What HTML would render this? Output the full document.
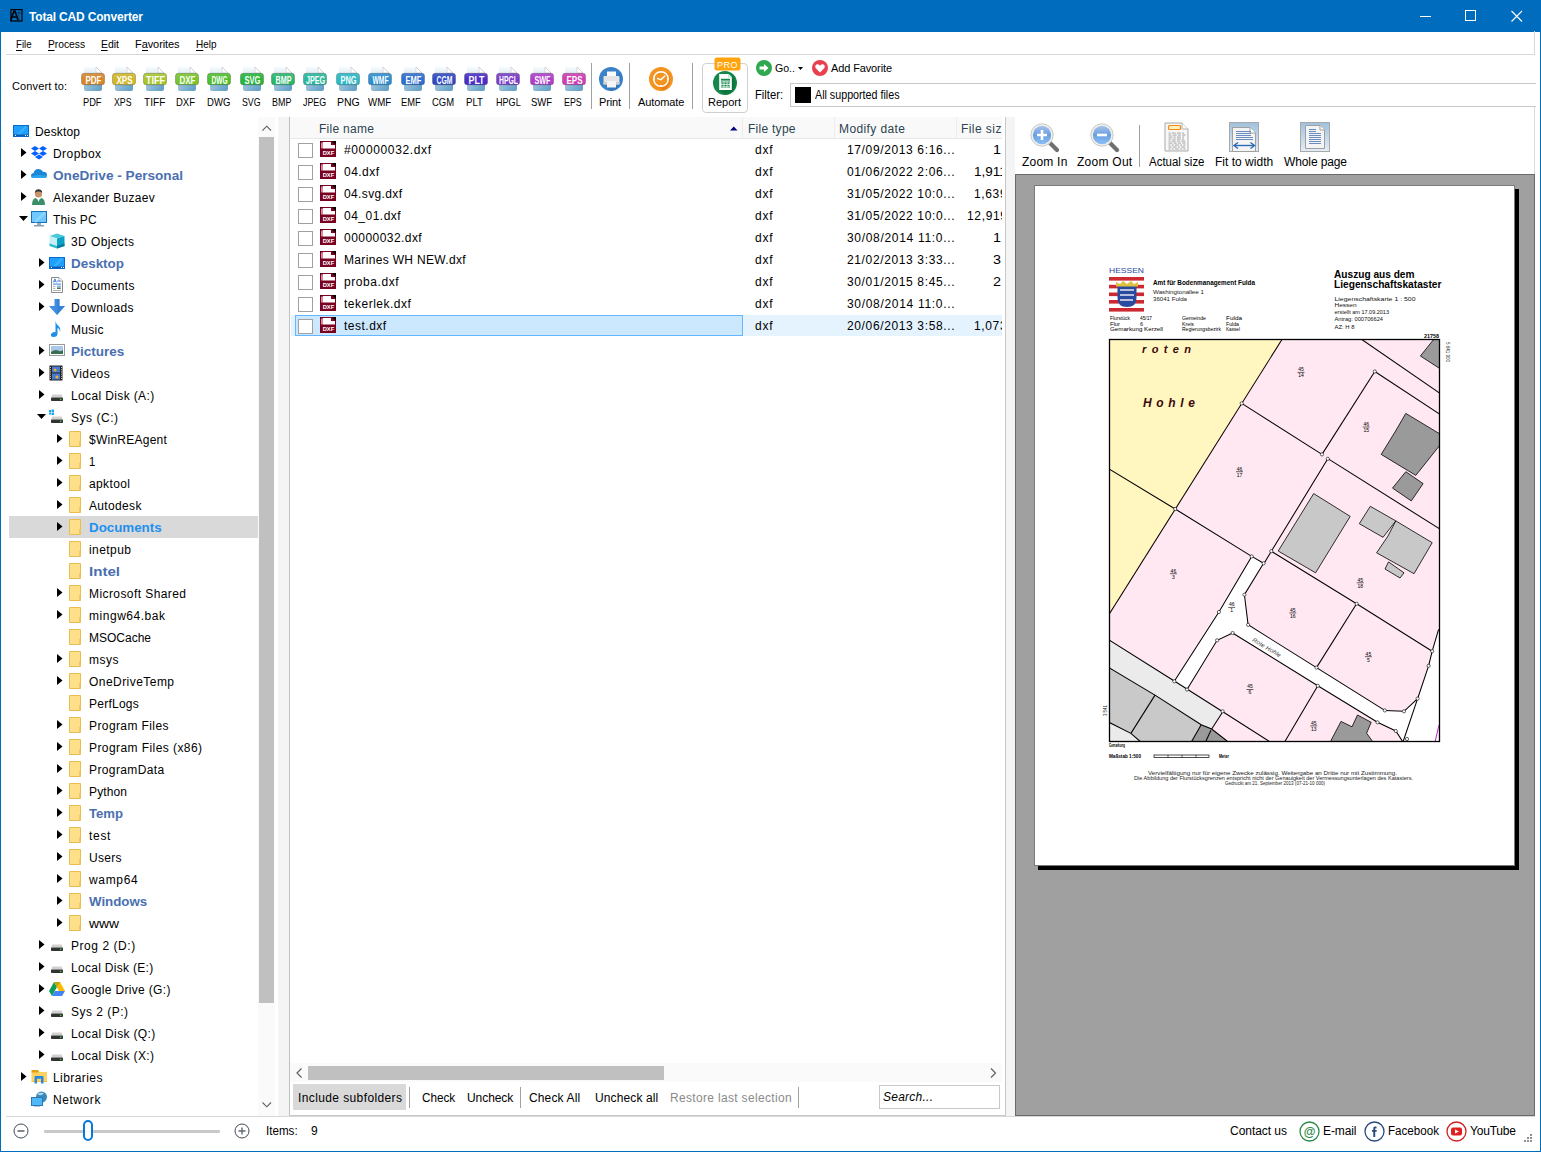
<!DOCTYPE html>
<html><head><meta charset="utf-8"><style>
html,body{margin:0;padding:0;}
body{width:1541px;height:1152px;position:relative;overflow:hidden;background:#fff;font-family:"Liberation Sans", sans-serif;font-size:12px;color:#000;}
div,svg{box-sizing:border-box;}
u{text-decoration:none;border-bottom:1px solid currentColor;}
</style></head><body>
<div style="position:absolute;left:0px;top:0px;width:1541px;height:32px;background:#006cbe;"></div><div style="position:absolute;left:0px;top:0px;width:1px;height:1152px;background:#006cbe;"></div><div style="position:absolute;left:1540px;top:0px;width:1px;height:1152px;background:#006cbe;"></div><div style="position:absolute;left:0px;top:1151px;width:1541px;height:1px;background:#006cbe;"></div><svg style="position:absolute;left:10px;top:9px;" width="13" height="13" viewBox="0 0 13 13"><rect x="1" y="0.5" width="11" height="11.5" fill="none" stroke="#000" stroke-width="1.2"/><path d="M0.5 12 L4 2 L5 2 L8 11 M2 8 H7" stroke="#000" stroke-width="1.6" fill="none"/><path d="M9 1 V12 M4 4 H12" stroke="#000" stroke-width="0.6" fill="none" opacity="0.6"/></svg><div style="position:absolute;top:11px;font-size:12px;line-height:12px;color:#fff;white-space:nowrap;font-weight:bold;letter-spacing:-0.173px;left:29px;">Total CAD Converter</div><svg style="position:absolute;left:1419px;top:10px;" width="14" height="12" viewBox="0 0 14 12"><path d="M1 6.5 H12" stroke="#fff" stroke-width="1"/></svg><svg style="position:absolute;left:1464px;top:10px;" width="14" height="12" viewBox="0 0 14 12"><rect x="1.5" y="0.5" width="10" height="10" fill="none" stroke="#fff" stroke-width="1"/></svg><svg style="position:absolute;left:1510px;top:10px;" width="14" height="13" viewBox="0 0 14 13"><path d="M1.5 1 L12 11.5 M12 1 L1.5 11.5" stroke="#fff" stroke-width="1.1"/></svg><div style="position:absolute;left:6px;top:54px;width:1529px;height:1px;background:#d8d8d8;"></div><div style="position:absolute;left:1534px;top:31px;width:1px;height:24px;background:#d8d8d8;"></div><div style="position:absolute;top:39px;font-size:11px;line-height:11px;color:#000;white-space:nowrap;transform:scaleX(0.8802);transform-origin:0 0;left:16px;"><u>F</u>ile</div><div style="position:absolute;top:39px;font-size:11px;line-height:11px;color:#000;white-space:nowrap;transform:scaleX(0.9312);transform-origin:0 0;left:48px;"><u>P</u>rocess</div><div style="position:absolute;top:39px;font-size:11px;line-height:11px;color:#000;white-space:nowrap;transform:scaleX(0.9496);transform-origin:0 0;left:101px;"><u>E</u>dit</div><div style="position:absolute;top:39px;font-size:11px;line-height:11px;color:#000;white-space:nowrap;letter-spacing:-0.079px;left:135px;">F<u>a</u>vorites</div><div style="position:absolute;top:39px;font-size:11px;line-height:11px;color:#000;white-space:nowrap;transform:scaleX(0.9062);transform-origin:0 0;left:196px;"><u>H</u>elp</div><div style="position:absolute;top:81px;font-size:11px;line-height:11px;color:#000;white-space:nowrap;letter-spacing:0.12px;left:12px;">Convert to:</div><div style="position:absolute;left:278px;top:117px;width:11px;height:999px;background:#f4f4f4;"></div><div style="position:absolute;left:1006px;top:117px;width:9px;height:999px;background:#f4f4f4;"></div><div style="position:absolute;left:6px;top:1116px;width:1529px;height:1px;background:#d8d8d8;"></div><div style="position:absolute;left:289px;top:117px;width:717px;height:999px;border:1px solid #c8c8c8;border-top:none;"></div><div style="position:absolute;left:289px;top:117px;width:1px;height:999px;background:#c0c0c0;"></div><div style="position:absolute;left:1015px;top:174px;width:520px;height:942px;background:#a0a0a0;border:1px solid #696969;"></div><svg width="0" height="0" style="position:absolute"><defs>
<linearGradient id="pgTop" x1="0" y1="0" x2="0" y2="1"><stop offset="0" stop-color="#f8fbfd"/><stop offset="1" stop-color="#d8e8f2"/></linearGradient>
<linearGradient id="pgBot" x1="0" y1="0" x2="1" y2="1"><stop offset="0" stop-color="#c4dcea"/><stop offset="1" stop-color="#5b9cc4"/></linearGradient>
</defs></svg><svg style="position:absolute;left:81px;top:66px;" width="24" height="26" viewBox="0 0 24 26"><defs><linearGradient id="bgPDF" x1="0" y1="0" x2="0" y2="1"><stop offset="0" stop-color="#d9862a" stop-opacity="0.85"/><stop offset="0.5" stop-color="#d9862a"/><stop offset="1" stop-color="#d9862a"/></linearGradient></defs><path d="M3 1 H15 L21 7 V23 Q21 25 19 25 H5 Q3 25 3 23 Z" fill="url(#pgBot)"/><path d="M3 1 H15 L21 7 V10 H3 Z" fill="url(#pgTop)"/><path d="M15 1 V7 H21" fill="#fff" stroke="#c8c8c8" stroke-width="0.6"/><path d="M15 1 L21 7" stroke="#b8b8b8" stroke-width="0.6"/><rect x="0.5" y="7.3" width="23" height="11.5" rx="2.5" fill="url(#bgPDF)" stroke="rgba(0,0,0,0.22)" stroke-width="1"/><text x="12.5" y="17.6" text-anchor="middle" font-family="Liberation Sans" font-weight="bold" font-size="11" fill="#fff" textLength="16" lengthAdjust="spacingAndGlyphs">PDF</text></svg><div style="position:absolute;top:97px;font-size:11px;line-height:11px;color:#000;white-space:nowrap;transform:scaleX(0.8409);transform-origin:0 0;left:83px;">PDF</div><svg style="position:absolute;left:112px;top:66px;" width="24" height="26" viewBox="0 0 24 26"><defs><linearGradient id="bgXPS" x1="0" y1="0" x2="0" y2="1"><stop offset="0" stop-color="#d3b823" stop-opacity="0.85"/><stop offset="0.5" stop-color="#d3b823"/><stop offset="1" stop-color="#d3b823"/></linearGradient></defs><path d="M3 1 H15 L21 7 V23 Q21 25 19 25 H5 Q3 25 3 23 Z" fill="url(#pgBot)"/><path d="M3 1 H15 L21 7 V10 H3 Z" fill="url(#pgTop)"/><path d="M15 1 V7 H21" fill="#fff" stroke="#c8c8c8" stroke-width="0.6"/><path d="M15 1 L21 7" stroke="#b8b8b8" stroke-width="0.6"/><rect x="0.5" y="7.3" width="23" height="11.5" rx="2.5" fill="url(#bgXPS)" stroke="rgba(0,0,0,0.22)" stroke-width="1"/><text x="12.5" y="17.6" text-anchor="middle" font-family="Liberation Sans" font-weight="bold" font-size="11" fill="#fff" textLength="16" lengthAdjust="spacingAndGlyphs">XPS</text></svg><div style="position:absolute;top:97px;font-size:11px;line-height:11px;color:#000;white-space:nowrap;transform:scaleX(0.7950);transform-origin:0 0;left:114px;">XPS</div><svg style="position:absolute;left:143px;top:66px;" width="24" height="26" viewBox="0 0 24 26"><defs><linearGradient id="bgTIFF" x1="0" y1="0" x2="0" y2="1"><stop offset="0" stop-color="#a9c52a" stop-opacity="0.85"/><stop offset="0.5" stop-color="#a9c52a"/><stop offset="1" stop-color="#a9c52a"/></linearGradient></defs><path d="M3 1 H15 L21 7 V23 Q21 25 19 25 H5 Q3 25 3 23 Z" fill="url(#pgBot)"/><path d="M3 1 H15 L21 7 V10 H3 Z" fill="url(#pgTop)"/><path d="M15 1 V7 H21" fill="#fff" stroke="#c8c8c8" stroke-width="0.6"/><path d="M15 1 L21 7" stroke="#b8b8b8" stroke-width="0.6"/><rect x="0.5" y="7.3" width="23" height="11.5" rx="2.5" fill="url(#bgTIFF)" stroke="rgba(0,0,0,0.22)" stroke-width="1"/><text x="12.5" y="17.6" text-anchor="middle" font-family="Liberation Sans" font-weight="bold" font-size="11" fill="#fff" textLength="19" lengthAdjust="spacingAndGlyphs">TIFF</text></svg><div style="position:absolute;top:97px;font-size:11px;line-height:11px;color:#000;white-space:nowrap;transform:scaleX(0.9176);transform-origin:0 0;left:144px;">TIFF</div><svg style="position:absolute;left:175px;top:66px;" width="24" height="26" viewBox="0 0 24 26"><defs><linearGradient id="bgDXF" x1="0" y1="0" x2="0" y2="1"><stop offset="0" stop-color="#79c42a" stop-opacity="0.85"/><stop offset="0.5" stop-color="#79c42a"/><stop offset="1" stop-color="#79c42a"/></linearGradient></defs><path d="M3 1 H15 L21 7 V23 Q21 25 19 25 H5 Q3 25 3 23 Z" fill="url(#pgBot)"/><path d="M3 1 H15 L21 7 V10 H3 Z" fill="url(#pgTop)"/><path d="M15 1 V7 H21" fill="#fff" stroke="#c8c8c8" stroke-width="0.6"/><path d="M15 1 L21 7" stroke="#b8b8b8" stroke-width="0.6"/><rect x="0.5" y="7.3" width="23" height="11.5" rx="2.5" fill="url(#bgDXF)" stroke="rgba(0,0,0,0.22)" stroke-width="1"/><text x="12.5" y="17.6" text-anchor="middle" font-family="Liberation Sans" font-weight="bold" font-size="11" fill="#fff" textLength="16" lengthAdjust="spacingAndGlyphs">DXF</text></svg><div style="position:absolute;top:97px;font-size:11px;line-height:11px;color:#000;white-space:nowrap;transform:scaleX(0.8636);transform-origin:0 0;left:176px;">DXF</div><svg style="position:absolute;left:207px;top:66px;" width="24" height="26" viewBox="0 0 24 26"><defs><linearGradient id="bgDWG" x1="0" y1="0" x2="0" y2="1"><stop offset="0" stop-color="#4fbf2a" stop-opacity="0.85"/><stop offset="0.5" stop-color="#4fbf2a"/><stop offset="1" stop-color="#4fbf2a"/></linearGradient></defs><path d="M3 1 H15 L21 7 V23 Q21 25 19 25 H5 Q3 25 3 23 Z" fill="url(#pgBot)"/><path d="M3 1 H15 L21 7 V10 H3 Z" fill="url(#pgTop)"/><path d="M15 1 V7 H21" fill="#fff" stroke="#c8c8c8" stroke-width="0.6"/><path d="M15 1 L21 7" stroke="#b8b8b8" stroke-width="0.6"/><rect x="0.5" y="7.3" width="23" height="11.5" rx="2.5" fill="url(#bgDWG)" stroke="rgba(0,0,0,0.22)" stroke-width="1"/><text x="12.5" y="17.6" text-anchor="middle" font-family="Liberation Sans" font-weight="bold" font-size="11" fill="#fff" textLength="16" lengthAdjust="spacingAndGlyphs">DWG</text></svg><div style="position:absolute;top:97px;font-size:11px;line-height:11px;color:#000;white-space:nowrap;transform:scaleX(0.8667);transform-origin:0 0;left:207px;">DWG</div><svg style="position:absolute;left:240px;top:66px;" width="24" height="26" viewBox="0 0 24 26"><defs><linearGradient id="bgSVG" x1="0" y1="0" x2="0" y2="1"><stop offset="0" stop-color="#27b63a" stop-opacity="0.85"/><stop offset="0.5" stop-color="#27b63a"/><stop offset="1" stop-color="#27b63a"/></linearGradient></defs><path d="M3 1 H15 L21 7 V23 Q21 25 19 25 H5 Q3 25 3 23 Z" fill="url(#pgBot)"/><path d="M3 1 H15 L21 7 V10 H3 Z" fill="url(#pgTop)"/><path d="M15 1 V7 H21" fill="#fff" stroke="#c8c8c8" stroke-width="0.6"/><path d="M15 1 L21 7" stroke="#b8b8b8" stroke-width="0.6"/><rect x="0.5" y="7.3" width="23" height="11.5" rx="2.5" fill="url(#bgSVG)" stroke="rgba(0,0,0,0.22)" stroke-width="1"/><text x="12.5" y="17.6" text-anchor="middle" font-family="Liberation Sans" font-weight="bold" font-size="11" fill="#fff" textLength="16" lengthAdjust="spacingAndGlyphs">SVG</text></svg><div style="position:absolute;top:97px;font-size:11px;line-height:11px;color:#000;white-space:nowrap;transform:scaleX(0.8007);transform-origin:0 0;left:242px;">SVG</div><svg style="position:absolute;left:271px;top:66px;" width="24" height="26" viewBox="0 0 24 26"><defs><linearGradient id="bgBMP" x1="0" y1="0" x2="0" y2="1"><stop offset="0" stop-color="#2ab66a" stop-opacity="0.85"/><stop offset="0.5" stop-color="#2ab66a"/><stop offset="1" stop-color="#2ab66a"/></linearGradient></defs><path d="M3 1 H15 L21 7 V23 Q21 25 19 25 H5 Q3 25 3 23 Z" fill="url(#pgBot)"/><path d="M3 1 H15 L21 7 V10 H3 Z" fill="url(#pgTop)"/><path d="M15 1 V7 H21" fill="#fff" stroke="#c8c8c8" stroke-width="0.6"/><path d="M15 1 L21 7" stroke="#b8b8b8" stroke-width="0.6"/><rect x="0.5" y="7.3" width="23" height="11.5" rx="2.5" fill="url(#bgBMP)" stroke="rgba(0,0,0,0.22)" stroke-width="1"/><text x="12.5" y="17.6" text-anchor="middle" font-family="Liberation Sans" font-weight="bold" font-size="11" fill="#fff" textLength="16" lengthAdjust="spacingAndGlyphs">BMP</text></svg><div style="position:absolute;top:97px;font-size:11px;line-height:11px;color:#000;white-space:nowrap;transform:scaleX(0.8138);transform-origin:0 0;left:272px;">BMP</div><svg style="position:absolute;left:303px;top:66px;" width="24" height="26" viewBox="0 0 24 26"><defs><linearGradient id="bgJPEG" x1="0" y1="0" x2="0" y2="1"><stop offset="0" stop-color="#2ab89c" stop-opacity="0.85"/><stop offset="0.5" stop-color="#2ab89c"/><stop offset="1" stop-color="#2ab89c"/></linearGradient></defs><path d="M3 1 H15 L21 7 V23 Q21 25 19 25 H5 Q3 25 3 23 Z" fill="url(#pgBot)"/><path d="M3 1 H15 L21 7 V10 H3 Z" fill="url(#pgTop)"/><path d="M15 1 V7 H21" fill="#fff" stroke="#c8c8c8" stroke-width="0.6"/><path d="M15 1 L21 7" stroke="#b8b8b8" stroke-width="0.6"/><rect x="0.5" y="7.3" width="23" height="11.5" rx="2.5" fill="url(#bgJPEG)" stroke="rgba(0,0,0,0.22)" stroke-width="1"/><text x="12.5" y="17.6" text-anchor="middle" font-family="Liberation Sans" font-weight="bold" font-size="11" fill="#fff" textLength="19" lengthAdjust="spacingAndGlyphs">JPEG</text></svg><div style="position:absolute;top:97px;font-size:11px;line-height:11px;color:#000;white-space:nowrap;transform:scaleX(0.8075);transform-origin:0 0;left:303px;">JPEG</div><svg style="position:absolute;left:336px;top:66px;" width="24" height="26" viewBox="0 0 24 26"><defs><linearGradient id="bgPNG" x1="0" y1="0" x2="0" y2="1"><stop offset="0" stop-color="#2bbac6" stop-opacity="0.85"/><stop offset="0.5" stop-color="#2bbac6"/><stop offset="1" stop-color="#2bbac6"/></linearGradient></defs><path d="M3 1 H15 L21 7 V23 Q21 25 19 25 H5 Q3 25 3 23 Z" fill="url(#pgBot)"/><path d="M3 1 H15 L21 7 V10 H3 Z" fill="url(#pgTop)"/><path d="M15 1 V7 H21" fill="#fff" stroke="#c8c8c8" stroke-width="0.6"/><path d="M15 1 L21 7" stroke="#b8b8b8" stroke-width="0.6"/><rect x="0.5" y="7.3" width="23" height="11.5" rx="2.5" fill="url(#bgPNG)" stroke="rgba(0,0,0,0.22)" stroke-width="1"/><text x="12.5" y="17.6" text-anchor="middle" font-family="Liberation Sans" font-weight="bold" font-size="11" fill="#fff" textLength="16" lengthAdjust="spacingAndGlyphs">PNG</text></svg><div style="position:absolute;top:97px;font-size:11px;line-height:11px;color:#000;white-space:nowrap;transform:scaleX(0.9565);transform-origin:0 0;left:337px;">PNG</div><svg style="position:absolute;left:368px;top:66px;" width="24" height="26" viewBox="0 0 24 26"><defs><linearGradient id="bgWMF" x1="0" y1="0" x2="0" y2="1"><stop offset="0" stop-color="#2c8fd2" stop-opacity="0.85"/><stop offset="0.5" stop-color="#2c8fd2"/><stop offset="1" stop-color="#2c8fd2"/></linearGradient></defs><path d="M3 1 H15 L21 7 V23 Q21 25 19 25 H5 Q3 25 3 23 Z" fill="url(#pgBot)"/><path d="M3 1 H15 L21 7 V10 H3 Z" fill="url(#pgTop)"/><path d="M15 1 V7 H21" fill="#fff" stroke="#c8c8c8" stroke-width="0.6"/><path d="M15 1 L21 7" stroke="#b8b8b8" stroke-width="0.6"/><rect x="0.5" y="7.3" width="23" height="11.5" rx="2.5" fill="url(#bgWMF)" stroke="rgba(0,0,0,0.22)" stroke-width="1"/><text x="12.5" y="17.6" text-anchor="middle" font-family="Liberation Sans" font-weight="bold" font-size="11" fill="#fff" textLength="16" lengthAdjust="spacingAndGlyphs">WMF</text></svg><div style="position:absolute;top:97px;font-size:11px;line-height:11px;color:#000;white-space:nowrap;transform:scaleX(0.8795);transform-origin:0 0;left:368px;">WMF</div><svg style="position:absolute;left:401px;top:66px;" width="24" height="26" viewBox="0 0 24 26"><defs><linearGradient id="bgEMF" x1="0" y1="0" x2="0" y2="1"><stop offset="0" stop-color="#2f6fd0" stop-opacity="0.85"/><stop offset="0.5" stop-color="#2f6fd0"/><stop offset="1" stop-color="#2f6fd0"/></linearGradient></defs><path d="M3 1 H15 L21 7 V23 Q21 25 19 25 H5 Q3 25 3 23 Z" fill="url(#pgBot)"/><path d="M3 1 H15 L21 7 V10 H3 Z" fill="url(#pgTop)"/><path d="M15 1 V7 H21" fill="#fff" stroke="#c8c8c8" stroke-width="0.6"/><path d="M15 1 L21 7" stroke="#b8b8b8" stroke-width="0.6"/><rect x="0.5" y="7.3" width="23" height="11.5" rx="2.5" fill="url(#bgEMF)" stroke="rgba(0,0,0,0.22)" stroke-width="1"/><text x="12.5" y="17.6" text-anchor="middle" font-family="Liberation Sans" font-weight="bold" font-size="11" fill="#fff" textLength="16" lengthAdjust="spacingAndGlyphs">EMF</text></svg><div style="position:absolute;top:97px;font-size:11px;line-height:11px;color:#000;white-space:nowrap;transform:scaleX(0.8485);transform-origin:0 0;left:401px;">EMF</div><svg style="position:absolute;left:432px;top:66px;" width="24" height="26" viewBox="0 0 24 26"><defs><linearGradient id="bgCGM" x1="0" y1="0" x2="0" y2="1"><stop offset="0" stop-color="#3049c4" stop-opacity="0.85"/><stop offset="0.5" stop-color="#3049c4"/><stop offset="1" stop-color="#3049c4"/></linearGradient></defs><path d="M3 1 H15 L21 7 V23 Q21 25 19 25 H5 Q3 25 3 23 Z" fill="url(#pgBot)"/><path d="M3 1 H15 L21 7 V10 H3 Z" fill="url(#pgTop)"/><path d="M15 1 V7 H21" fill="#fff" stroke="#c8c8c8" stroke-width="0.6"/><path d="M15 1 L21 7" stroke="#b8b8b8" stroke-width="0.6"/><rect x="0.5" y="7.3" width="23" height="11.5" rx="2.5" fill="url(#bgCGM)" stroke="rgba(0,0,0,0.22)" stroke-width="1"/><text x="12.5" y="17.6" text-anchor="middle" font-family="Liberation Sans" font-weight="bold" font-size="11" fill="#fff" textLength="16" lengthAdjust="spacingAndGlyphs">CGM</text></svg><div style="position:absolute;top:97px;font-size:11px;line-height:11px;color:#000;white-space:nowrap;transform:scaleX(0.8573);transform-origin:0 0;left:432px;">CGM</div><svg style="position:absolute;left:464px;top:66px;" width="24" height="26" viewBox="0 0 24 26"><defs><linearGradient id="bgPLT" x1="0" y1="0" x2="0" y2="1"><stop offset="0" stop-color="#4b2ec8" stop-opacity="0.85"/><stop offset="0.5" stop-color="#4b2ec8"/><stop offset="1" stop-color="#4b2ec8"/></linearGradient></defs><path d="M3 1 H15 L21 7 V23 Q21 25 19 25 H5 Q3 25 3 23 Z" fill="url(#pgBot)"/><path d="M3 1 H15 L21 7 V10 H3 Z" fill="url(#pgTop)"/><path d="M15 1 V7 H21" fill="#fff" stroke="#c8c8c8" stroke-width="0.6"/><path d="M15 1 L21 7" stroke="#b8b8b8" stroke-width="0.6"/><rect x="0.5" y="7.3" width="23" height="11.5" rx="2.5" fill="url(#bgPLT)" stroke="rgba(0,0,0,0.22)" stroke-width="1"/><text x="12.5" y="17.6" text-anchor="middle" font-family="Liberation Sans" font-weight="bold" font-size="11" fill="#fff" textLength="16" lengthAdjust="spacingAndGlyphs">PLT</text></svg><div style="position:absolute;top:97px;font-size:11px;line-height:11px;color:#000;white-space:nowrap;transform:scaleX(0.8783);transform-origin:0 0;left:466px;">PLT</div><svg style="position:absolute;left:496px;top:66px;" width="24" height="26" viewBox="0 0 24 26"><defs><linearGradient id="bgHPGL" x1="0" y1="0" x2="0" y2="1"><stop offset="0" stop-color="#7b3cc8" stop-opacity="0.85"/><stop offset="0.5" stop-color="#7b3cc8"/><stop offset="1" stop-color="#7b3cc8"/></linearGradient></defs><path d="M3 1 H15 L21 7 V23 Q21 25 19 25 H5 Q3 25 3 23 Z" fill="url(#pgBot)"/><path d="M3 1 H15 L21 7 V10 H3 Z" fill="url(#pgTop)"/><path d="M15 1 V7 H21" fill="#fff" stroke="#c8c8c8" stroke-width="0.6"/><path d="M15 1 L21 7" stroke="#b8b8b8" stroke-width="0.6"/><rect x="0.5" y="7.3" width="23" height="11.5" rx="2.5" fill="url(#bgHPGL)" stroke="rgba(0,0,0,0.22)" stroke-width="1"/><text x="12.5" y="17.6" text-anchor="middle" font-family="Liberation Sans" font-weight="bold" font-size="11" fill="#fff" textLength="19" lengthAdjust="spacingAndGlyphs">HPGL</text></svg><div style="position:absolute;top:97px;font-size:11px;line-height:11px;color:#000;white-space:nowrap;transform:scaleX(0.8246);transform-origin:0 0;left:496px;">HPGL</div><svg style="position:absolute;left:530px;top:66px;" width="24" height="26" viewBox="0 0 24 26"><defs><linearGradient id="bgSWF" x1="0" y1="0" x2="0" y2="1"><stop offset="0" stop-color="#b23ccc" stop-opacity="0.85"/><stop offset="0.5" stop-color="#b23ccc"/><stop offset="1" stop-color="#b23ccc"/></linearGradient></defs><path d="M3 1 H15 L21 7 V23 Q21 25 19 25 H5 Q3 25 3 23 Z" fill="url(#pgBot)"/><path d="M3 1 H15 L21 7 V10 H3 Z" fill="url(#pgTop)"/><path d="M15 1 V7 H21" fill="#fff" stroke="#c8c8c8" stroke-width="0.6"/><path d="M15 1 L21 7" stroke="#b8b8b8" stroke-width="0.6"/><rect x="0.5" y="7.3" width="23" height="11.5" rx="2.5" fill="url(#bgSWF)" stroke="rgba(0,0,0,0.22)" stroke-width="1"/><text x="12.5" y="17.6" text-anchor="middle" font-family="Liberation Sans" font-weight="bold" font-size="11" fill="#fff" textLength="16" lengthAdjust="spacingAndGlyphs">SWF</text></svg><div style="position:absolute;top:97px;font-size:11px;line-height:11px;color:#000;white-space:nowrap;transform:scaleX(0.8675);transform-origin:0 0;left:531px;">SWF</div><svg style="position:absolute;left:562px;top:66px;" width="24" height="26" viewBox="0 0 24 26"><defs><linearGradient id="bgEPS" x1="0" y1="0" x2="0" y2="1"><stop offset="0" stop-color="#d23cb4" stop-opacity="0.85"/><stop offset="0.5" stop-color="#d23cb4"/><stop offset="1" stop-color="#d23cb4"/></linearGradient></defs><path d="M3 1 H15 L21 7 V23 Q21 25 19 25 H5 Q3 25 3 23 Z" fill="url(#pgBot)"/><path d="M3 1 H15 L21 7 V10 H3 Z" fill="url(#pgTop)"/><path d="M15 1 V7 H21" fill="#fff" stroke="#c8c8c8" stroke-width="0.6"/><path d="M15 1 L21 7" stroke="#b8b8b8" stroke-width="0.6"/><rect x="0.5" y="7.3" width="23" height="11.5" rx="2.5" fill="url(#bgEPS)" stroke="rgba(0,0,0,0.22)" stroke-width="1"/><text x="12.5" y="17.6" text-anchor="middle" font-family="Liberation Sans" font-weight="bold" font-size="11" fill="#fff" textLength="16" lengthAdjust="spacingAndGlyphs">EPS</text></svg><div style="position:absolute;top:97px;font-size:11px;line-height:11px;color:#000;white-space:nowrap;transform:scaleX(0.8041);transform-origin:0 0;left:564px;">EPS</div><div style="position:absolute;left:591px;top:63px;width:1px;height:46px;background:#a0a0a0;"></div><div style="position:absolute;left:629px;top:63px;width:1px;height:46px;background:#a0a0a0;"></div><div style="position:absolute;left:692px;top:63px;width:1px;height:46px;background:#a0a0a0;"></div><svg style="position:absolute;left:599px;top:67px;" width="24" height="24" viewBox="0 0 24 24"><circle cx="12" cy="12" r="12" fill="#3b82c8"/><path d="M19.5 5 A12 12 0 0 1 12 24 L5 17 H19 V9 Z" fill="#2a68a8" opacity="0.45"/><rect x="8" y="4.5" width="9" height="6" fill="#fafafa"/><rect x="4.5" y="9" width="16" height="8.5" rx="1" fill="#e4e4e4"/><rect x="4.5" y="15" width="16" height="2.5" fill="#cfcfcf"/><rect x="8" y="14" width="9" height="6.5" fill="#f6f6f6"/></svg><div style="position:absolute;top:97px;font-size:11px;line-height:11px;color:#000;white-space:nowrap;letter-spacing:-0.154px;left:599px;">Print</div><svg style="position:absolute;left:649px;top:67px;" width="24" height="24" viewBox="0 0 24 24"><circle cx="12" cy="12" r="12" fill="#f49420"/><path d="M19 6 A12 12 0 0 1 14 23.8 L7 17 Z" fill="#e07010" opacity="0.55"/><circle cx="12" cy="12" r="7.3" fill="#f49420" stroke="#fff" stroke-width="1.5"/><path d="M12 4.6 V6 M12 18 V19.4 M4.6 12 H6 M18 12 H19.4" stroke="#fff" stroke-width="1.3"/><path d="M8.5 11.5 L12 12.6 L15.8 9" stroke="#fff" stroke-width="1.4" fill="none" stroke-linecap="round"/></svg><div style="position:absolute;top:97px;font-size:11px;line-height:11px;color:#000;white-space:nowrap;letter-spacing:-0.097px;left:638px;">Automate</div><div style="position:absolute;left:702px;top:63px;width:46px;height:50px;border:1px solid #d0d0d0;border-radius:4px;"></div><svg style="position:absolute;left:713px;top:71px;" width="24" height="24" viewBox="0 0 24 24"><circle cx="12" cy="12" r="12" fill="#13884a"/><path d="M19 4 A12 12 0 0 1 12 24 L6 18 L19 18 Z" fill="#0a6a34" opacity="0.6"/><path d="M6.2 3 H15.5 L18.8 6.3 V19 H6.2 Z" fill="#fff"/><path d="M15.5 3 V6.3 H18.8" fill="#dfe" stroke="#9cb" stroke-width="0.5"/><rect x="8" y="7.8" width="9" height="1.8" fill="#13884a"/><rect x="8" y="10.3" width="9" height="6.2" fill="#13884a"/><path d="M8 13.4 H17 M11 10.3 V16.5 M14 10.3 V16.5" stroke="#fff" stroke-width="0.8"/><rect x="8.8" y="11" width="7.4" height="4.8" fill="none" stroke="#fff" stroke-width="0.6"/></svg><svg style="position:absolute;left:714px;top:57px;" width="27" height="14" viewBox="0 0 27 14"><path d="M2 0.5 H25 L26.5 2 V12 L25 13.5 H2 L0.5 12 V2 Z" fill="#ffa40c"/></svg><div style="position:absolute;top:61px;font-size:9px;line-height:9px;color:#fff;white-space:nowrap;letter-spacing:0.498px;left:717px;">PRO</div><div style="position:absolute;top:97px;font-size:11px;line-height:11px;color:#000;white-space:nowrap;letter-spacing:-0.003px;left:708px;">Report</div><svg style="position:absolute;left:756px;top:60px;" width="16" height="16" viewBox="0 0 16 16"><circle cx="8" cy="8" r="8" fill="#2fa84f"/><path d="M3.5 6.5 H8 V4 L12.5 8 L8 12 V9.5 H3.5 Z" fill="#fff"/></svg><div style="position:absolute;top:63px;font-size:11px;line-height:11px;color:#000;white-space:nowrap;transform:scaleX(0.9622);transform-origin:0 0;left:775px;">Go..</div><svg style="position:absolute;left:798px;top:67px;" width="6" height="4" viewBox="0 0 6 4"><path d="M0 0 H5 L2.5 3 Z" fill="#000"/></svg><svg style="position:absolute;left:812px;top:60px;" width="16" height="16" viewBox="0 0 16 16"><circle cx="8" cy="8" r="8" fill="#e8404f"/><path d="M8 12.5 L3.8 8.2 Q2.6 6.8 3.6 5.2 Q5 3.6 6.8 4.6 L8 5.8 L9.2 4.6 Q11 3.6 12.4 5.2 Q13.4 6.8 12.2 8.2 Z" fill="#fff"/></svg><div style="position:absolute;top:63px;font-size:11px;line-height:11px;color:#000;white-space:nowrap;letter-spacing:-0.124px;left:831px;">Add Favorite</div><div style="position:absolute;top:89px;font-size:12px;line-height:12px;color:#000;white-space:nowrap;transform:scaleX(0.9334);transform-origin:0 0;left:755px;">Filter:</div><div style="position:absolute;left:790px;top:83px;width:746px;height:24px;border:1px solid #c8c8c8;border-right:none;"></div><div style="position:absolute;left:795px;top:87px;width:16px;height:16px;background:#000;"></div><div style="position:absolute;top:89px;font-size:12px;line-height:12px;color:#000;white-space:nowrap;transform:scaleX(0.8922);transform-origin:0 0;left:815px;">All supported files</div><svg style="position:absolute;left:13px;top:123px;" width="16" height="16" viewBox="0 0 16 16"><rect x="0.5" y="2.5" width="15" height="11" fill="#1ea0ff" stroke="#0a6ad0"/><path d="M4 13 L13 3.5" stroke="#5cc0ff" stroke-width="2" opacity="0.5"/><rect x="0.5" y="11.5" width="15" height="2" fill="#0a5cb8"/><rect x="2" y="12" width="1" height="1" fill="#fff"/><rect x="12" y="12" width="1" height="1" fill="#fff"/><rect x="14" y="12" width="1" height="1" fill="#fff"/></svg><div style="position:absolute;top:126px;font-size:12px;line-height:12px;color:#000;white-space:nowrap;letter-spacing:0.163px;left:35px;">Desktop</div><svg style="position:absolute;left:21px;top:148px;" width="6" height="10" viewBox="0 0 6 10"><path d="M0 0 L5.5 4.5 L0 9 Z" fill="#000"/></svg><svg style="position:absolute;left:31px;top:145px;" width="16" height="16" viewBox="0 0 16 16"><path d="M4 1 L8 3.5 L4 6 L0 3.5 Z M12 1 L16 3.5 L12 6 L8 3.5 Z M4 6 L8 8.5 L4 11 L0 8.5 Z M12 6 L16 8.5 L12 11 L8 8.5 Z M8 9.5 L12 12 L8 14.5 L4 12 Z" fill="#0061fe"/></svg><div style="position:absolute;top:148px;font-size:12px;line-height:12px;color:#000;white-space:nowrap;letter-spacing:0.441px;left:53px;">Dropbox</div><svg style="position:absolute;left:21px;top:170px;" width="6" height="10" viewBox="0 0 6 10"><path d="M0 0 L5.5 4.5 L0 9 Z" fill="#000"/></svg><svg style="position:absolute;left:31px;top:167px;" width="16" height="16" viewBox="0 0 16 16"><path d="M2.5 11 Q0 11 0 8.5 Q0 6.2 2.6 6 Q3.5 2 7.5 2 Q10.5 2 12 4.8 Q16 4.8 16 8 Q16 11 13 11 Z" fill="#1a86d8"/><path d="M0.5 9.5 Q4 7 16 8.5 Q16 11 13 11 H2.5 Q0.6 11 0.5 9.5Z" fill="#2aa4ea"/></svg><div style="position:absolute;top:170px;font-size:12px;line-height:12px;color:#4a6fb0;white-space:nowrap;font-weight:bold;transform:scaleX(1.1334);transform-origin:0 0;left:53px;">OneDrive - Personal</div><svg style="position:absolute;left:21px;top:192px;" width="6" height="10" viewBox="0 0 6 10"><path d="M0 0 L5.5 4.5 L0 9 Z" fill="#000"/></svg><svg style="position:absolute;left:31px;top:189px;" width="16" height="16" viewBox="0 0 16 16"><circle cx="7.5" cy="5" r="3.6" fill="#c8956a"/><path d="M3.8 4.2 Q4 0.3 7.5 0.3 Q11 0.3 11.2 4 Q10 2.2 7.5 2.5 Q5 2.2 3.8 4.2Z" fill="#333"/><path d="M1 16 Q1 10 4.5 9 L7.5 11 L10.5 9 Q14 10 14 16 Z" fill="#3a8f68"/><path d="M6.4 10.3 L7.5 13 L8.6 10.3Z" fill="#fff"/></svg><div style="position:absolute;top:192px;font-size:12px;line-height:12px;color:#000;white-space:nowrap;letter-spacing:0.287px;left:53px;">Alexander Buzaev</div><svg style="position:absolute;left:19px;top:216px;" width="10" height="6" viewBox="0 0 10 6"><path d="M0 0 H9 L4.5 5 Z" fill="#000"/></svg><svg style="position:absolute;left:31px;top:211px;" width="16" height="16" viewBox="0 0 16 16"><rect x="0.5" y="0.5" width="15" height="11" fill="#6cc8ff" stroke="#1a70b8"/><path d="M4 11 L14 1.5" stroke="#a8e0ff" stroke-width="3" opacity="0.5"/><rect x="6" y="12" width="4" height="2" fill="#9ab"/><rect x="3" y="14" width="10" height="1.5" fill="#8aa0b8"/></svg><div style="position:absolute;top:214px;font-size:12px;line-height:12px;color:#000;white-space:nowrap;letter-spacing:0.154px;left:53px;">This PC</div><svg style="position:absolute;left:49px;top:233px;" width="16" height="16" viewBox="0 0 16 16"><path d="M0.5 3 L8 0.5 L15.5 3 L8 5.5 Z" fill="#46cadc"/><path d="M0.5 3 L8 5.5 V15.5 L0.5 13 Z" fill="#c4eff4"/><path d="M8 5.5 L15.5 3 V13 L8 15.5 Z" fill="#0aa2c4"/><path d="M0.5 10.5 L8 13 V15.5 L0.5 13 Z" fill="#30bcd0"/><path d="M8 13 L15.5 10.5 V13 L8 15.5 Z" fill="#07789a"/></svg><div style="position:absolute;top:236px;font-size:12px;line-height:12px;color:#000;white-space:nowrap;letter-spacing:0.405px;left:71px;">3D Objects</div><svg style="position:absolute;left:39px;top:258px;" width="6" height="10" viewBox="0 0 6 10"><path d="M0 0 L5.5 4.5 L0 9 Z" fill="#000"/></svg><svg style="position:absolute;left:49px;top:255px;" width="16" height="16" viewBox="0 0 16 16"><rect x="0.5" y="2.5" width="15" height="11" fill="#1ea0ff" stroke="#0a6ad0"/><path d="M4 13 L13 3.5" stroke="#5cc0ff" stroke-width="2" opacity="0.5"/><rect x="0.5" y="11.5" width="15" height="2" fill="#0a5cb8"/><rect x="2" y="12" width="1" height="1" fill="#fff"/><rect x="12" y="12" width="1" height="1" fill="#fff"/><rect x="14" y="12" width="1" height="1" fill="#fff"/></svg><div style="position:absolute;top:258px;font-size:12px;line-height:12px;color:#4a6fb0;white-space:nowrap;font-weight:bold;transform:scaleX(1.1196);transform-origin:0 0;left:71px;">Desktop</div><svg style="position:absolute;left:39px;top:280px;" width="6" height="10" viewBox="0 0 6 10"><path d="M0 0 L5.5 4.5 L0 9 Z" fill="#000"/></svg><svg style="position:absolute;left:49px;top:277px;" width="16" height="16" viewBox="0 0 16 16"><path d="M2.5 0.5 H10 L13.5 4 V15.5 H2.5 Z" fill="#fff" stroke="#8a8a8a"/><path d="M10 0.5 V4 H13.5" fill="#fff" stroke="#9a9a9a" stroke-width="0.7"/><path d="M4.3 5.6 L6 1.8 L7.3 5.6 M4.8 4.2 H7" stroke="#3a7ae0" stroke-width="0.9" fill="none"/><rect x="8" y="3.6" width="3.5" height="0.9" fill="#3a7ae0"/><rect x="4" y="6.6" width="8" height="1" fill="#3a80e0"/><rect x="4" y="8.9" width="2.5" height="0.8" fill="#a0a0a0"/><rect x="8" y="8.7" width="3.8" height="1" fill="#4a90e8"/><rect x="4" y="10.9" width="2.5" height="0.8" fill="#a0a0a0"/><rect x="8" y="10.5" width="3.8" height="1.4" fill="#3a6a40"/><rect x="4" y="13" width="8" height="0.8" fill="#a0a0a0"/></svg><div style="position:absolute;top:280px;font-size:12px;line-height:12px;color:#000;white-space:nowrap;letter-spacing:0.351px;left:71px;">Documents</div><svg style="position:absolute;left:39px;top:302px;" width="6" height="10" viewBox="0 0 6 10"><path d="M0 0 L5.5 4.5 L0 9 Z" fill="#000"/></svg><svg style="position:absolute;left:49px;top:299px;" width="16" height="16" viewBox="0 0 16 16"><path d="M5.5 0 H10.5 V7 H16 L8 16 L0 7 H5.5 Z" fill="#3d8de0"/><path d="M8 0 H10.5 V7 H16 L8 16Z" fill="#2a78cc" opacity="0.5"/></svg><div style="position:absolute;top:302px;font-size:12px;line-height:12px;color:#000;white-space:nowrap;letter-spacing:0.404px;left:71px;">Downloads</div><svg style="position:absolute;left:49px;top:321px;" width="16" height="16" viewBox="0 0 16 16"><path d="M6.5 0 Q7 3 9.5 5 Q12 7.5 11 11 Q10.8 7.5 8.5 7 V12.5 Q8.5 16 4.5 16 Q1.5 16 2 13.5 Q2.5 11 6 11 Q6.3 11 6.5 11.1 Z" fill="#1e90e8"/></svg><div style="position:absolute;top:324px;font-size:12px;line-height:12px;color:#000;white-space:nowrap;letter-spacing:0.291px;left:71px;">Music</div><svg style="position:absolute;left:39px;top:346px;" width="6" height="10" viewBox="0 0 6 10"><path d="M0 0 L5.5 4.5 L0 9 Z" fill="#000"/></svg><svg style="position:absolute;left:49px;top:343px;" width="16" height="16" viewBox="0 0 16 16"><rect x="0.5" y="1.5" width="15" height="11" fill="#fff" stroke="#999"/><rect x="2" y="3" width="12" height="8" fill="#a8c8e8"/><path d="M2 9 Q6 6 9 7.5 Q12 9 14 7 V11 H2Z" fill="#3a7050"/></svg><div style="position:absolute;top:346px;font-size:12px;line-height:12px;color:#4a6fb0;white-space:nowrap;font-weight:bold;transform:scaleX(1.1256);transform-origin:0 0;left:71px;">Pictures</div><svg style="position:absolute;left:39px;top:368px;" width="6" height="10" viewBox="0 0 6 10"><path d="M0 0 L5.5 4.5 L0 9 Z" fill="#000"/></svg><svg style="position:absolute;left:49px;top:365px;" width="16" height="16" viewBox="0 0 16 16"><rect x="0.5" y="0.5" width="13" height="15" fill="#222"/><rect x="3" y="1.5" width="8" height="6" fill="#4a7ad0"/><rect x="3" y="8.5" width="8" height="6" fill="#4a7ad0"/><circle cx="6" cy="5" r="1.5" fill="#e8b030"/><circle cx="8" cy="12" r="1.5" fill="#e8b030"/><path d="M1.5 2 V15 M12.5 2 V15" stroke="#ddd" stroke-width="0.9" stroke-dasharray="1 1.2"/></svg><div style="position:absolute;top:368px;font-size:12px;line-height:12px;color:#000;white-space:nowrap;letter-spacing:0.446px;left:71px;">Videos</div><svg style="position:absolute;left:39px;top:390px;" width="6" height="10" viewBox="0 0 6 10"><path d="M0 0 L5.5 4.5 L0 9 Z" fill="#000"/></svg><svg style="position:absolute;left:49px;top:387px;" width="16" height="16" viewBox="0 0 16 16"><path d="M3.5 7.5 H12.5 L14 10.5 H2 Z" fill="#d0d0d0"/><rect x="2" y="10.5" width="12" height="3.5" rx="0.8" fill="#333"/><circle cx="11.7" cy="12.2" r="0.8" fill="#3cdc3c"/></svg><div style="position:absolute;top:390px;font-size:12px;line-height:12px;color:#000;white-space:nowrap;letter-spacing:0.37px;left:71px;">Local Disk (A:)</div><svg style="position:absolute;left:37px;top:414px;" width="10" height="6" viewBox="0 0 10 6"><path d="M0 0 H9 L4.5 5 Z" fill="#000"/></svg><svg style="position:absolute;left:49px;top:409px;" width="16" height="16" viewBox="0 0 16 16"><rect x="0" y="1" width="2" height="2" fill="#18a8f0"/><rect x="2.5" y="0.5" width="2.5" height="2.5" fill="#18a8f0"/><rect x="0" y="3.5" width="2" height="2" fill="#18a8f0"/><rect x="2.5" y="3.5" width="2.5" height="2.5" fill="#18a8f0"/><path d="M3.5 7.5 H12.5 L14 10.5 H2 Z" fill="#d0d0d0"/><rect x="2" y="10.5" width="12" height="3.5" rx="0.8" fill="#333"/><circle cx="11.7" cy="12.2" r="0.8" fill="#3cdc3c"/></svg><div style="position:absolute;top:412px;font-size:12px;line-height:12px;color:#000;white-space:nowrap;letter-spacing:0.524px;left:71px;">Sys (C:)</div><svg style="position:absolute;left:57px;top:434px;" width="6" height="10" viewBox="0 0 6 10"><path d="M0 0 L5.5 4.5 L0 9 Z" fill="#000"/></svg><svg style="position:absolute;left:67px;top:431px;" width="16" height="16" viewBox="0 0 16 16"><path d="M2.5 0.5 H13.5 V15.5 H2.5 Z" fill="#ffe08a" stroke="#e8bc50"/><path d="M12 10 H13.5 V15.5 H12Z" fill="#f0c860"/></svg><div style="position:absolute;top:434px;font-size:12px;line-height:12px;color:#000;white-space:nowrap;letter-spacing:0.243px;left:89px;">$WinREAgent</div><svg style="position:absolute;left:57px;top:456px;" width="6" height="10" viewBox="0 0 6 10"><path d="M0 0 L5.5 4.5 L0 9 Z" fill="#000"/></svg><svg style="position:absolute;left:67px;top:453px;" width="16" height="16" viewBox="0 0 16 16"><path d="M2.5 0.5 H13.5 V15.5 H2.5 Z" fill="#ffe08a" stroke="#e8bc50"/><path d="M12 10 H13.5 V15.5 H12Z" fill="#f0c860"/></svg><div style="position:absolute;top:456px;font-size:12px;line-height:12px;color:#000;white-space:nowrap;transform:scaleX(0.9291);transform-origin:0 0;left:89px;">1</div><svg style="position:absolute;left:57px;top:478px;" width="6" height="10" viewBox="0 0 6 10"><path d="M0 0 L5.5 4.5 L0 9 Z" fill="#000"/></svg><svg style="position:absolute;left:67px;top:475px;" width="16" height="16" viewBox="0 0 16 16"><path d="M2.5 0.5 H13.5 V15.5 H2.5 Z" fill="#ffe08a" stroke="#e8bc50"/><path d="M12 10 H13.5 V15.5 H12Z" fill="#f0c860"/></svg><div style="position:absolute;top:478px;font-size:12px;line-height:12px;color:#000;white-space:nowrap;letter-spacing:0.385px;left:89px;">apktool</div><svg style="position:absolute;left:57px;top:500px;" width="6" height="10" viewBox="0 0 6 10"><path d="M0 0 L5.5 4.5 L0 9 Z" fill="#000"/></svg><svg style="position:absolute;left:67px;top:497px;" width="16" height="16" viewBox="0 0 16 16"><path d="M2.5 0.5 H13.5 V15.5 H2.5 Z" fill="#ffe08a" stroke="#e8bc50"/><path d="M12 10 H13.5 V15.5 H12Z" fill="#f0c860"/></svg><div style="position:absolute;top:500px;font-size:12px;line-height:12px;color:#000;white-space:nowrap;letter-spacing:0.338px;left:89px;">Autodesk</div><div style="position:absolute;left:9px;top:516px;width:249px;height:22px;background:#d9d9d9;"></div><svg style="position:absolute;left:57px;top:522px;" width="6" height="10" viewBox="0 0 6 10"><path d="M0 0 L5.5 4.5 L0 9 Z" fill="#000"/></svg><svg style="position:absolute;left:67px;top:519px;" width="16" height="16" viewBox="0 0 16 16"><path d="M2.5 0.5 H13.5 V15.5 H2.5 Z" fill="#ffe08a" stroke="#e8bc50"/><path d="M12 10 H13.5 V15.5 H12Z" fill="#f0c860"/></svg><div style="position:absolute;top:522px;font-size:12px;line-height:12px;color:#1e90f0;white-space:nowrap;font-weight:bold;transform:scaleX(1.1111);transform-origin:0 0;left:89px;">Documents</div><svg style="position:absolute;left:67px;top:541px;" width="16" height="16" viewBox="0 0 16 16"><path d="M2.5 0.5 H13.5 V15.5 H2.5 Z" fill="#ffe08a" stroke="#e8bc50"/><path d="M12 10 H13.5 V15.5 H12Z" fill="#f0c860"/></svg><div style="position:absolute;top:544px;font-size:12px;line-height:12px;color:#000;white-space:nowrap;letter-spacing:0.439px;left:89px;">inetpub</div><svg style="position:absolute;left:67px;top:563px;" width="16" height="16" viewBox="0 0 16 16"><path d="M2.5 0.5 H13.5 V15.5 H2.5 Z" fill="#ffe08a" stroke="#e8bc50"/><path d="M12 10 H13.5 V15.5 H12Z" fill="#f0c860"/></svg><div style="position:absolute;top:566px;font-size:12px;line-height:12px;color:#4a6fb0;white-space:nowrap;font-weight:bold;transform:scaleX(1.2568);transform-origin:0 0;left:89px;">Intel</div><svg style="position:absolute;left:57px;top:588px;" width="6" height="10" viewBox="0 0 6 10"><path d="M0 0 L5.5 4.5 L0 9 Z" fill="#000"/></svg><svg style="position:absolute;left:67px;top:585px;" width="16" height="16" viewBox="0 0 16 16"><path d="M2.5 0.5 H13.5 V15.5 H2.5 Z" fill="#ffe08a" stroke="#e8bc50"/><path d="M12 10 H13.5 V15.5 H12Z" fill="#f0c860"/></svg><div style="position:absolute;top:588px;font-size:12px;line-height:12px;color:#000;white-space:nowrap;letter-spacing:0.42px;left:89px;">Microsoft Shared</div><svg style="position:absolute;left:57px;top:610px;" width="6" height="10" viewBox="0 0 6 10"><path d="M0 0 L5.5 4.5 L0 9 Z" fill="#000"/></svg><svg style="position:absolute;left:67px;top:607px;" width="16" height="16" viewBox="0 0 16 16"><path d="M2.5 0.5 H13.5 V15.5 H2.5 Z" fill="#ffe08a" stroke="#e8bc50"/><path d="M12 10 H13.5 V15.5 H12Z" fill="#f0c860"/></svg><div style="position:absolute;top:610px;font-size:12px;line-height:12px;color:#000;white-space:nowrap;letter-spacing:0.53px;left:89px;">mingw64.bak</div><svg style="position:absolute;left:67px;top:629px;" width="16" height="16" viewBox="0 0 16 16"><path d="M2.5 0.5 H13.5 V15.5 H2.5 Z" fill="#ffe08a" stroke="#e8bc50"/><path d="M12 10 H13.5 V15.5 H12Z" fill="#f0c860"/></svg><div style="position:absolute;top:632px;font-size:12px;line-height:12px;color:#000;white-space:nowrap;letter-spacing:-0.003px;left:89px;">MSOCache</div><svg style="position:absolute;left:57px;top:654px;" width="6" height="10" viewBox="0 0 6 10"><path d="M0 0 L5.5 4.5 L0 9 Z" fill="#000"/></svg><svg style="position:absolute;left:67px;top:651px;" width="16" height="16" viewBox="0 0 16 16"><path d="M2.5 0.5 H13.5 V15.5 H2.5 Z" fill="#ffe08a" stroke="#e8bc50"/><path d="M12 10 H13.5 V15.5 H12Z" fill="#f0c860"/></svg><div style="position:absolute;top:654px;font-size:12px;line-height:12px;color:#000;white-space:nowrap;letter-spacing:0.535px;left:89px;">msys</div><svg style="position:absolute;left:57px;top:676px;" width="6" height="10" viewBox="0 0 6 10"><path d="M0 0 L5.5 4.5 L0 9 Z" fill="#000"/></svg><svg style="position:absolute;left:67px;top:673px;" width="16" height="16" viewBox="0 0 16 16"><path d="M2.5 0.5 H13.5 V15.5 H2.5 Z" fill="#ffe08a" stroke="#e8bc50"/><path d="M12 10 H13.5 V15.5 H12Z" fill="#f0c860"/></svg><div style="position:absolute;top:676px;font-size:12px;line-height:12px;color:#000;white-space:nowrap;letter-spacing:0.452px;left:89px;">OneDriveTemp</div><svg style="position:absolute;left:67px;top:695px;" width="16" height="16" viewBox="0 0 16 16"><path d="M2.5 0.5 H13.5 V15.5 H2.5 Z" fill="#ffe08a" stroke="#e8bc50"/><path d="M12 10 H13.5 V15.5 H12Z" fill="#f0c860"/></svg><div style="position:absolute;top:698px;font-size:12px;line-height:12px;color:#000;white-space:nowrap;letter-spacing:0.253px;left:89px;">PerfLogs</div><svg style="position:absolute;left:57px;top:720px;" width="6" height="10" viewBox="0 0 6 10"><path d="M0 0 L5.5 4.5 L0 9 Z" fill="#000"/></svg><svg style="position:absolute;left:67px;top:717px;" width="16" height="16" viewBox="0 0 16 16"><path d="M2.5 0.5 H13.5 V15.5 H2.5 Z" fill="#ffe08a" stroke="#e8bc50"/><path d="M12 10 H13.5 V15.5 H12Z" fill="#f0c860"/></svg><div style="position:absolute;top:720px;font-size:12px;line-height:12px;color:#000;white-space:nowrap;letter-spacing:0.402px;left:89px;">Program Files</div><svg style="position:absolute;left:57px;top:742px;" width="6" height="10" viewBox="0 0 6 10"><path d="M0 0 L5.5 4.5 L0 9 Z" fill="#000"/></svg><svg style="position:absolute;left:67px;top:739px;" width="16" height="16" viewBox="0 0 16 16"><path d="M2.5 0.5 H13.5 V15.5 H2.5 Z" fill="#ffe08a" stroke="#e8bc50"/><path d="M12 10 H13.5 V15.5 H12Z" fill="#f0c860"/></svg><div style="position:absolute;top:742px;font-size:12px;line-height:12px;color:#000;white-space:nowrap;letter-spacing:0.425px;left:89px;">Program Files (x86)</div><svg style="position:absolute;left:57px;top:764px;" width="6" height="10" viewBox="0 0 6 10"><path d="M0 0 L5.5 4.5 L0 9 Z" fill="#000"/></svg><svg style="position:absolute;left:67px;top:761px;" width="16" height="16" viewBox="0 0 16 16"><path d="M2.5 0.5 H13.5 V15.5 H2.5 Z" fill="#ffe08a" stroke="#e8bc50"/><path d="M12 10 H13.5 V15.5 H12Z" fill="#f0c860"/></svg><div style="position:absolute;top:764px;font-size:12px;line-height:12px;color:#000;white-space:nowrap;letter-spacing:0.384px;left:89px;">ProgramData</div><svg style="position:absolute;left:57px;top:786px;" width="6" height="10" viewBox="0 0 6 10"><path d="M0 0 L5.5 4.5 L0 9 Z" fill="#000"/></svg><svg style="position:absolute;left:67px;top:783px;" width="16" height="16" viewBox="0 0 16 16"><path d="M2.5 0.5 H13.5 V15.5 H2.5 Z" fill="#ffe08a" stroke="#e8bc50"/><path d="M12 10 H13.5 V15.5 H12Z" fill="#f0c860"/></svg><div style="position:absolute;top:786px;font-size:12px;line-height:12px;color:#000;white-space:nowrap;letter-spacing:0.128px;left:89px;">Python</div><svg style="position:absolute;left:57px;top:808px;" width="6" height="10" viewBox="0 0 6 10"><path d="M0 0 L5.5 4.5 L0 9 Z" fill="#000"/></svg><svg style="position:absolute;left:67px;top:805px;" width="16" height="16" viewBox="0 0 16 16"><path d="M2.5 0.5 H13.5 V15.5 H2.5 Z" fill="#ffe08a" stroke="#e8bc50"/><path d="M12 10 H13.5 V15.5 H12Z" fill="#f0c860"/></svg><div style="position:absolute;top:808px;font-size:12px;line-height:12px;color:#4a6fb0;white-space:nowrap;font-weight:bold;transform:scaleX(1.0928);transform-origin:0 0;left:89px;">Temp</div><svg style="position:absolute;left:57px;top:830px;" width="6" height="10" viewBox="0 0 6 10"><path d="M0 0 L5.5 4.5 L0 9 Z" fill="#000"/></svg><svg style="position:absolute;left:67px;top:827px;" width="16" height="16" viewBox="0 0 16 16"><path d="M2.5 0.5 H13.5 V15.5 H2.5 Z" fill="#ffe08a" stroke="#e8bc50"/><path d="M12 10 H13.5 V15.5 H12Z" fill="#f0c860"/></svg><div style="position:absolute;top:830px;font-size:12px;line-height:12px;color:#000;white-space:nowrap;letter-spacing:0.686px;left:89px;">test</div><svg style="position:absolute;left:57px;top:852px;" width="6" height="10" viewBox="0 0 6 10"><path d="M0 0 L5.5 4.5 L0 9 Z" fill="#000"/></svg><svg style="position:absolute;left:67px;top:849px;" width="16" height="16" viewBox="0 0 16 16"><path d="M2.5 0.5 H13.5 V15.5 H2.5 Z" fill="#ffe08a" stroke="#e8bc50"/><path d="M12 10 H13.5 V15.5 H12Z" fill="#f0c860"/></svg><div style="position:absolute;top:852px;font-size:12px;line-height:12px;color:#000;white-space:nowrap;letter-spacing:0.316px;left:89px;">Users</div><svg style="position:absolute;left:57px;top:874px;" width="6" height="10" viewBox="0 0 6 10"><path d="M0 0 L5.5 4.5 L0 9 Z" fill="#000"/></svg><svg style="position:absolute;left:67px;top:871px;" width="16" height="16" viewBox="0 0 16 16"><path d="M2.5 0.5 H13.5 V15.5 H2.5 Z" fill="#ffe08a" stroke="#e8bc50"/><path d="M12 10 H13.5 V15.5 H12Z" fill="#f0c860"/></svg><div style="position:absolute;top:874px;font-size:12px;line-height:12px;color:#000;white-space:nowrap;letter-spacing:0.669px;left:89px;">wamp64</div><svg style="position:absolute;left:57px;top:896px;" width="6" height="10" viewBox="0 0 6 10"><path d="M0 0 L5.5 4.5 L0 9 Z" fill="#000"/></svg><svg style="position:absolute;left:67px;top:893px;" width="16" height="16" viewBox="0 0 16 16"><path d="M2.5 0.5 H13.5 V15.5 H2.5 Z" fill="#ffe08a" stroke="#e8bc50"/><path d="M12 10 H13.5 V15.5 H12Z" fill="#f0c860"/></svg><div style="position:absolute;top:896px;font-size:12px;line-height:12px;color:#4a6fb0;white-space:nowrap;font-weight:bold;transform:scaleX(1.1075);transform-origin:0 0;left:89px;">Windows</div><svg style="position:absolute;left:57px;top:918px;" width="6" height="10" viewBox="0 0 6 10"><path d="M0 0 L5.5 4.5 L0 9 Z" fill="#000"/></svg><svg style="position:absolute;left:67px;top:915px;" width="16" height="16" viewBox="0 0 16 16"><path d="M2.5 0.5 H13.5 V15.5 H2.5 Z" fill="#ffe08a" stroke="#e8bc50"/><path d="M12 10 H13.5 V15.5 H12Z" fill="#f0c860"/></svg><div style="position:absolute;top:918px;font-size:12px;line-height:12px;color:#000;white-space:nowrap;transform:scaleX(1.1539);transform-origin:0 0;left:89px;">www</div><svg style="position:absolute;left:39px;top:940px;" width="6" height="10" viewBox="0 0 6 10"><path d="M0 0 L5.5 4.5 L0 9 Z" fill="#000"/></svg><svg style="position:absolute;left:49px;top:937px;" width="16" height="16" viewBox="0 0 16 16"><path d="M3.5 7.5 H12.5 L14 10.5 H2 Z" fill="#d0d0d0"/><rect x="2" y="10.5" width="12" height="3.5" rx="0.8" fill="#333"/><circle cx="11.7" cy="12.2" r="0.8" fill="#3cdc3c"/></svg><div style="position:absolute;top:940px;font-size:12px;line-height:12px;color:#000;white-space:nowrap;letter-spacing:0.552px;left:71px;">Prog 2 (D:)</div><svg style="position:absolute;left:39px;top:962px;" width="6" height="10" viewBox="0 0 6 10"><path d="M0 0 L5.5 4.5 L0 9 Z" fill="#000"/></svg><svg style="position:absolute;left:49px;top:959px;" width="16" height="16" viewBox="0 0 16 16"><path d="M3.5 7.5 H12.5 L14 10.5 H2 Z" fill="#d0d0d0"/><rect x="2" y="10.5" width="12" height="3.5" rx="0.8" fill="#333"/><circle cx="11.7" cy="12.2" r="0.8" fill="#3cdc3c"/></svg><div style="position:absolute;top:962px;font-size:12px;line-height:12px;color:#000;white-space:nowrap;letter-spacing:0.299px;left:71px;">Local Disk (E:)</div><svg style="position:absolute;left:39px;top:984px;" width="6" height="10" viewBox="0 0 6 10"><path d="M0 0 L5.5 4.5 L0 9 Z" fill="#000"/></svg><svg style="position:absolute;left:49px;top:981px;" width="16" height="16" viewBox="0 0 16 16"><path d="M5 1 H11 L16 10 L13 15 H3 L0 10 Z" fill="#fff"/><path d="M5 1 L0 10 L3 15 L8 6Z" fill="#0f9d58"/><path d="M5 1 H11 L16 10 H10Z" fill="#ffba00"/><path d="M3 15 H13 L16 10 H6Z" fill="#4285f4"/><path d="M8 6 L5 1 H11Z" fill="#188038" opacity="0.3"/></svg><div style="position:absolute;top:984px;font-size:12px;line-height:12px;color:#000;white-space:nowrap;letter-spacing:0.336px;left:71px;">Google Drive (G:)</div><svg style="position:absolute;left:39px;top:1006px;" width="6" height="10" viewBox="0 0 6 10"><path d="M0 0 L5.5 4.5 L0 9 Z" fill="#000"/></svg><svg style="position:absolute;left:49px;top:1003px;" width="16" height="16" viewBox="0 0 16 16"><path d="M3.5 7.5 H12.5 L14 10.5 H2 Z" fill="#d0d0d0"/><rect x="2" y="10.5" width="12" height="3.5" rx="0.8" fill="#333"/><circle cx="11.7" cy="12.2" r="0.8" fill="#3cdc3c"/></svg><div style="position:absolute;top:1006px;font-size:12px;line-height:12px;color:#000;white-space:nowrap;letter-spacing:0.481px;left:71px;">Sys 2 (P:)</div><svg style="position:absolute;left:39px;top:1028px;" width="6" height="10" viewBox="0 0 6 10"><path d="M0 0 L5.5 4.5 L0 9 Z" fill="#000"/></svg><svg style="position:absolute;left:49px;top:1025px;" width="16" height="16" viewBox="0 0 16 16"><path d="M3.5 7.5 H12.5 L14 10.5 H2 Z" fill="#d0d0d0"/><rect x="2" y="10.5" width="12" height="3.5" rx="0.8" fill="#333"/><circle cx="11.7" cy="12.2" r="0.8" fill="#3cdc3c"/></svg><div style="position:absolute;top:1028px;font-size:12px;line-height:12px;color:#000;white-space:nowrap;letter-spacing:0.347px;left:71px;">Local Disk (Q:)</div><svg style="position:absolute;left:39px;top:1050px;" width="6" height="10" viewBox="0 0 6 10"><path d="M0 0 L5.5 4.5 L0 9 Z" fill="#000"/></svg><svg style="position:absolute;left:49px;top:1047px;" width="16" height="16" viewBox="0 0 16 16"><path d="M3.5 7.5 H12.5 L14 10.5 H2 Z" fill="#d0d0d0"/><rect x="2" y="10.5" width="12" height="3.5" rx="0.8" fill="#333"/><circle cx="11.7" cy="12.2" r="0.8" fill="#3cdc3c"/></svg><div style="position:absolute;top:1050px;font-size:12px;line-height:12px;color:#000;white-space:nowrap;letter-spacing:0.356px;left:71px;">Local Disk (X:)</div><svg style="position:absolute;left:21px;top:1072px;" width="6" height="10" viewBox="0 0 6 10"><path d="M0 0 L5.5 4.5 L0 9 Z" fill="#000"/></svg><svg style="position:absolute;left:31px;top:1069px;" width="16" height="16" viewBox="0 0 16 16"><rect x="0.5" y="3" width="15.5" height="10" fill="#ffd262"/><path d="M0.5 1 H7 L8.3 2.3 L7 3.5 H0.5 Z" fill="#e0a010"/><path d="M0.5 12 H16 V13 H0.5Z" fill="#f8c030"/><path d="M3.5 14.5 V8 Q3.5 7 4.5 7 H11.5 Q12.5 7 12.5 8 V14.5 H10 V9.8 H6 V14.5 Z" fill="#2a88e0"/></svg><div style="position:absolute;top:1072px;font-size:12px;line-height:12px;color:#000;white-space:nowrap;letter-spacing:0.423px;left:53px;">Libraries</div><svg style="position:absolute;left:31px;top:1091px;" width="16" height="16" viewBox="0 0 16 16"><circle cx="10.5" cy="6" r="5.5" fill="#3a8ab8"/><path d="M6 3 Q9 1 13 2 Q11 5 8 4Z" fill="#a8d8f0"/><rect x="0.5" y="6.5" width="11" height="8" fill="#50b8f8" stroke="#2a78b8"/><path d="M3 16 H9" stroke="#6a90b0" stroke-width="1"/></svg><div style="position:absolute;top:1094px;font-size:12px;line-height:12px;color:#000;white-space:nowrap;letter-spacing:0.565px;left:53px;">Network</div><div style="position:absolute;left:258px;top:117px;width:17px;height:999px;background:#fafafa;"></div><div style="position:absolute;left:259px;top:137px;width:15px;height:866px;background:#c0c0c0;"></div><svg style="position:absolute;left:262px;top:125px;" width="10" height="7" viewBox="0 0 10 7"><path d="M0.5 5.5 L4.75 1.2 L9 5.5" stroke="#606060" stroke-width="1.1" fill="none"/></svg><svg style="position:absolute;left:262px;top:1101px;" width="10" height="7" viewBox="0 0 10 7"><path d="M0.5 1.5 L4.75 5.8 L9 1.5" stroke="#606060" stroke-width="1.1" fill="none"/></svg><div style="position:absolute;left:290px;top:117px;width:712px;height:21px;background:#f9f9f9;"></div><div style="position:absolute;left:290px;top:138px;width:712px;height:1px;background:#e8e8e8;"></div><div style="position:absolute;left:742px;top:117px;width:1px;height:21px;background:#ececec;"></div><div style="position:absolute;left:834px;top:117px;width:1px;height:21px;background:#ececec;"></div><div style="position:absolute;left:956px;top:117px;width:1px;height:21px;background:#ececec;"></div><div style="position:absolute;top:123px;font-size:12px;line-height:12px;color:#2c4450;white-space:nowrap;letter-spacing:0.29px;left:319px;">File name</div><svg style="position:absolute;left:730px;top:126px;" width="8" height="5" viewBox="0 0 8 5"><path d="M0 4.5 L3.75 0.5 L7.5 4.5 Z" fill="#000080"/></svg><div style="position:absolute;top:123px;font-size:12px;line-height:12px;color:#2c4450;white-space:nowrap;letter-spacing:0.269px;left:748px;">File type</div><div style="position:absolute;top:123px;font-size:12px;line-height:12px;color:#2c4450;white-space:nowrap;letter-spacing:0.397px;left:839px;">Modify date</div><div style="position:absolute;left:956px;top:117px;width:46px;height:21px;overflow:hidden;"><div style="position:absolute;top:6px;font-size:12px;line-height:12px;color:#2c4450;white-space:nowrap;letter-spacing:0.436px;left:5px;">File size</div></div><div style="position:absolute;left:298px;top:143px;width:15px;height:15px;background:#fff;border:1px solid #a0a0a0;"></div><svg style="position:absolute;left:320px;top:141px;" width="16" height="16" viewBox="0 0 16 16"><rect x="0" y="0" width="16" height="16" fill="#000"/><path d="M1.5 0 H12 L16 4 V16 H0 V1.5 Q0 0 1.5 0 Z" fill="#7a0022"/><path d="M3 1 H11 V4 H15 V7.6 H3 Z" fill="#fff"/><rect x="1.2" y="1.5" width="1.6" height="6" fill="#f2a8bc"/><text x="8.4" y="14.3" text-anchor="middle" font-family="Liberation Sans" font-weight="bold" font-size="6.2" fill="#fff" textLength="11.5" lengthAdjust="spacingAndGlyphs">DXF</text></svg><div style="position:absolute;top:144px;font-size:12px;line-height:12px;color:#000;white-space:nowrap;letter-spacing:0.633px;left:344px;">#00000032.dxf</div><div style="position:absolute;top:144px;font-size:12px;line-height:12px;color:#000;white-space:nowrap;letter-spacing:0.747px;left:755px;">dxf</div><div style="position:absolute;top:144px;font-size:12px;line-height:12px;color:#000;white-space:nowrap;letter-spacing:0.633px;left:847px;">17/09/2013 6:16...</div><div style="position:absolute;left:956px;top:139px;width:46px;height:21px;overflow:hidden;"><div style="position:absolute;top:5px;font-size:12px;line-height:12px;color:#000;white-space:nowrap;transform:scaleX(1.1988);transform-origin:0 0;left:37px;">1</div></div><div style="position:absolute;left:298px;top:165px;width:15px;height:15px;background:#fff;border:1px solid #a0a0a0;"></div><svg style="position:absolute;left:320px;top:163px;" width="16" height="16" viewBox="0 0 16 16"><rect x="0" y="0" width="16" height="16" fill="#000"/><path d="M1.5 0 H12 L16 4 V16 H0 V1.5 Q0 0 1.5 0 Z" fill="#7a0022"/><path d="M3 1 H11 V4 H15 V7.6 H3 Z" fill="#fff"/><rect x="1.2" y="1.5" width="1.6" height="6" fill="#f2a8bc"/><text x="8.4" y="14.3" text-anchor="middle" font-family="Liberation Sans" font-weight="bold" font-size="6.2" fill="#fff" textLength="11.5" lengthAdjust="spacingAndGlyphs">DXF</text></svg><div style="position:absolute;top:166px;font-size:12px;line-height:12px;color:#000;white-space:nowrap;letter-spacing:0.463px;left:344px;">04.dxf</div><div style="position:absolute;top:166px;font-size:12px;line-height:12px;color:#000;white-space:nowrap;letter-spacing:0.747px;left:755px;">dxf</div><div style="position:absolute;top:166px;font-size:12px;line-height:12px;color:#000;white-space:nowrap;letter-spacing:0.633px;left:847px;">01/06/2022 2:06...</div><div style="position:absolute;left:956px;top:161px;width:46px;height:21px;overflow:hidden;"><div style="position:absolute;top:5px;font-size:12px;line-height:12px;color:#000;white-space:nowrap;transform:scaleX(1.1189);transform-origin:0 0;left:18px;">1,911</div></div><div style="position:absolute;left:298px;top:187px;width:15px;height:15px;background:#fff;border:1px solid #a0a0a0;"></div><svg style="position:absolute;left:320px;top:185px;" width="16" height="16" viewBox="0 0 16 16"><rect x="0" y="0" width="16" height="16" fill="#000"/><path d="M1.5 0 H12 L16 4 V16 H0 V1.5 Q0 0 1.5 0 Z" fill="#7a0022"/><path d="M3 1 H11 V4 H15 V7.6 H3 Z" fill="#fff"/><rect x="1.2" y="1.5" width="1.6" height="6" fill="#f2a8bc"/><text x="8.4" y="14.3" text-anchor="middle" font-family="Liberation Sans" font-weight="bold" font-size="6.2" fill="#fff" textLength="11.5" lengthAdjust="spacingAndGlyphs">DXF</text></svg><div style="position:absolute;top:188px;font-size:12px;line-height:12px;color:#000;white-space:nowrap;letter-spacing:0.367px;left:344px;">04.svg.dxf</div><div style="position:absolute;top:188px;font-size:12px;line-height:12px;color:#000;white-space:nowrap;letter-spacing:0.747px;left:755px;">dxf</div><div style="position:absolute;top:188px;font-size:12px;line-height:12px;color:#000;white-space:nowrap;letter-spacing:0.633px;left:847px;">31/05/2022 10:0...</div><div style="position:absolute;left:956px;top:183px;width:46px;height:21px;overflow:hidden;"><div style="position:absolute;top:5px;font-size:12px;line-height:12px;color:#000;white-space:nowrap;letter-spacing:0.643px;left:18px;">1,639</div></div><div style="position:absolute;left:298px;top:209px;width:15px;height:15px;background:#fff;border:1px solid #a0a0a0;"></div><svg style="position:absolute;left:320px;top:207px;" width="16" height="16" viewBox="0 0 16 16"><rect x="0" y="0" width="16" height="16" fill="#000"/><path d="M1.5 0 H12 L16 4 V16 H0 V1.5 Q0 0 1.5 0 Z" fill="#7a0022"/><path d="M3 1 H11 V4 H15 V7.6 H3 Z" fill="#fff"/><rect x="1.2" y="1.5" width="1.6" height="6" fill="#f2a8bc"/><text x="8.4" y="14.3" text-anchor="middle" font-family="Liberation Sans" font-weight="bold" font-size="6.2" fill="#fff" textLength="11.5" lengthAdjust="spacingAndGlyphs">DXF</text></svg><div style="position:absolute;top:210px;font-size:12px;line-height:12px;color:#000;white-space:nowrap;letter-spacing:0.487px;left:344px;">04_01.dxf</div><div style="position:absolute;top:210px;font-size:12px;line-height:12px;color:#000;white-space:nowrap;letter-spacing:0.747px;left:755px;">dxf</div><div style="position:absolute;top:210px;font-size:12px;line-height:12px;color:#000;white-space:nowrap;letter-spacing:0.633px;left:847px;">31/05/2022 10:0...</div><div style="position:absolute;left:956px;top:205px;width:46px;height:21px;overflow:hidden;"><div style="position:absolute;top:5px;font-size:12px;line-height:12px;color:#000;white-space:nowrap;letter-spacing:0.66px;left:11px;">12,919</div></div><div style="position:absolute;left:298px;top:231px;width:15px;height:15px;background:#fff;border:1px solid #a0a0a0;"></div><svg style="position:absolute;left:320px;top:229px;" width="16" height="16" viewBox="0 0 16 16"><rect x="0" y="0" width="16" height="16" fill="#000"/><path d="M1.5 0 H12 L16 4 V16 H0 V1.5 Q0 0 1.5 0 Z" fill="#7a0022"/><path d="M3 1 H11 V4 H15 V7.6 H3 Z" fill="#fff"/><rect x="1.2" y="1.5" width="1.6" height="6" fill="#f2a8bc"/><text x="8.4" y="14.3" text-anchor="middle" font-family="Liberation Sans" font-weight="bold" font-size="6.2" fill="#fff" textLength="11.5" lengthAdjust="spacingAndGlyphs">DXF</text></svg><div style="position:absolute;top:232px;font-size:12px;line-height:12px;color:#000;white-space:nowrap;letter-spacing:0.452px;left:344px;">00000032.dxf</div><div style="position:absolute;top:232px;font-size:12px;line-height:12px;color:#000;white-space:nowrap;letter-spacing:0.747px;left:755px;">dxf</div><div style="position:absolute;top:232px;font-size:12px;line-height:12px;color:#000;white-space:nowrap;letter-spacing:0.685px;left:847px;">30/08/2014 11:0...</div><div style="position:absolute;left:956px;top:227px;width:46px;height:21px;overflow:hidden;"><div style="position:absolute;top:5px;font-size:12px;line-height:12px;color:#000;white-space:nowrap;transform:scaleX(1.1988);transform-origin:0 0;left:37px;">1</div></div><div style="position:absolute;left:298px;top:253px;width:15px;height:15px;background:#fff;border:1px solid #a0a0a0;"></div><svg style="position:absolute;left:320px;top:251px;" width="16" height="16" viewBox="0 0 16 16"><rect x="0" y="0" width="16" height="16" fill="#000"/><path d="M1.5 0 H12 L16 4 V16 H0 V1.5 Q0 0 1.5 0 Z" fill="#7a0022"/><path d="M3 1 H11 V4 H15 V7.6 H3 Z" fill="#fff"/><rect x="1.2" y="1.5" width="1.6" height="6" fill="#f2a8bc"/><text x="8.4" y="14.3" text-anchor="middle" font-family="Liberation Sans" font-weight="bold" font-size="6.2" fill="#fff" textLength="11.5" lengthAdjust="spacingAndGlyphs">DXF</text></svg><div style="position:absolute;top:254px;font-size:12px;line-height:12px;color:#000;white-space:nowrap;letter-spacing:0.334px;left:344px;">Marines WH NEW.dxf</div><div style="position:absolute;top:254px;font-size:12px;line-height:12px;color:#000;white-space:nowrap;letter-spacing:0.747px;left:755px;">dxf</div><div style="position:absolute;top:254px;font-size:12px;line-height:12px;color:#000;white-space:nowrap;letter-spacing:0.633px;left:847px;">21/02/2013 3:33...</div><div style="position:absolute;left:956px;top:249px;width:46px;height:21px;overflow:hidden;"><div style="position:absolute;top:5px;font-size:12px;line-height:12px;color:#000;white-space:nowrap;transform:scaleX(1.1988);transform-origin:0 0;left:37px;">3</div></div><div style="position:absolute;left:298px;top:275px;width:15px;height:15px;background:#fff;border:1px solid #a0a0a0;"></div><svg style="position:absolute;left:320px;top:273px;" width="16" height="16" viewBox="0 0 16 16"><rect x="0" y="0" width="16" height="16" fill="#000"/><path d="M1.5 0 H12 L16 4 V16 H0 V1.5 Q0 0 1.5 0 Z" fill="#7a0022"/><path d="M3 1 H11 V4 H15 V7.6 H3 Z" fill="#fff"/><rect x="1.2" y="1.5" width="1.6" height="6" fill="#f2a8bc"/><text x="8.4" y="14.3" text-anchor="middle" font-family="Liberation Sans" font-weight="bold" font-size="6.2" fill="#fff" textLength="11.5" lengthAdjust="spacingAndGlyphs">DXF</text></svg><div style="position:absolute;top:276px;font-size:12px;line-height:12px;color:#000;white-space:nowrap;letter-spacing:0.571px;left:344px;">proba.dxf</div><div style="position:absolute;top:276px;font-size:12px;line-height:12px;color:#000;white-space:nowrap;letter-spacing:0.747px;left:755px;">dxf</div><div style="position:absolute;top:276px;font-size:12px;line-height:12px;color:#000;white-space:nowrap;letter-spacing:0.633px;left:847px;">30/01/2015 8:45...</div><div style="position:absolute;left:956px;top:271px;width:46px;height:21px;overflow:hidden;"><div style="position:absolute;top:5px;font-size:12px;line-height:12px;color:#000;white-space:nowrap;transform:scaleX(1.1988);transform-origin:0 0;left:37px;">2</div></div><div style="position:absolute;left:298px;top:297px;width:15px;height:15px;background:#fff;border:1px solid #a0a0a0;"></div><svg style="position:absolute;left:320px;top:295px;" width="16" height="16" viewBox="0 0 16 16"><rect x="0" y="0" width="16" height="16" fill="#000"/><path d="M1.5 0 H12 L16 4 V16 H0 V1.5 Q0 0 1.5 0 Z" fill="#7a0022"/><path d="M3 1 H11 V4 H15 V7.6 H3 Z" fill="#fff"/><rect x="1.2" y="1.5" width="1.6" height="6" fill="#f2a8bc"/><text x="8.4" y="14.3" text-anchor="middle" font-family="Liberation Sans" font-weight="bold" font-size="6.2" fill="#fff" textLength="11.5" lengthAdjust="spacingAndGlyphs">DXF</text></svg><div style="position:absolute;top:298px;font-size:12px;line-height:12px;color:#000;white-space:nowrap;letter-spacing:0.495px;left:344px;">tekerlek.dxf</div><div style="position:absolute;top:298px;font-size:12px;line-height:12px;color:#000;white-space:nowrap;letter-spacing:0.747px;left:755px;">dxf</div><div style="position:absolute;top:298px;font-size:12px;line-height:12px;color:#000;white-space:nowrap;letter-spacing:0.685px;left:847px;">30/08/2014 11:0...</div><div style="position:absolute;left:291px;top:315px;width:711px;height:21px;background:#e5f3ff;"></div><div style="position:absolute;left:295px;top:315px;width:448px;height:21px;background:#cce8ff;border:1px solid #66b5ff;"></div><div style="position:absolute;left:298px;top:319px;width:15px;height:15px;background:#fff;border:1px solid #a0a0a0;"></div><svg style="position:absolute;left:320px;top:317px;" width="16" height="16" viewBox="0 0 16 16"><rect x="0" y="0" width="16" height="16" fill="#000"/><path d="M1.5 0 H12 L16 4 V16 H0 V1.5 Q0 0 1.5 0 Z" fill="#7a0022"/><path d="M3 1 H11 V4 H15 V7.6 H3 Z" fill="#fff"/><rect x="1.2" y="1.5" width="1.6" height="6" fill="#f2a8bc"/><text x="8.4" y="14.3" text-anchor="middle" font-family="Liberation Sans" font-weight="bold" font-size="6.2" fill="#fff" textLength="11.5" lengthAdjust="spacingAndGlyphs">DXF</text></svg><div style="position:absolute;top:320px;font-size:12px;line-height:12px;color:#000;white-space:nowrap;letter-spacing:0.503px;left:344px;">test.dxf</div><div style="position:absolute;top:320px;font-size:12px;line-height:12px;color:#000;white-space:nowrap;letter-spacing:0.747px;left:755px;">dxf</div><div style="position:absolute;top:320px;font-size:12px;line-height:12px;color:#000;white-space:nowrap;letter-spacing:0.633px;left:847px;">20/06/2013 3:58...</div><div style="position:absolute;left:956px;top:315px;width:46px;height:21px;overflow:hidden;"><div style="position:absolute;top:5px;font-size:12px;line-height:12px;color:#000;white-space:nowrap;letter-spacing:0.643px;left:18px;">1,073</div></div><div style="position:absolute;left:290px;top:1063px;width:712px;height:19px;background:#fafafa;"></div><div style="position:absolute;left:308px;top:1066px;width:356px;height:14px;background:#c0c0c0;"></div><svg style="position:absolute;left:296px;top:1068px;" width="7" height="11" viewBox="0 0 7 11"><path d="M5.5 0.5 L1 5 L5.5 9.5" stroke="#606060" stroke-width="1.2" fill="none"/></svg><svg style="position:absolute;left:990px;top:1068px;" width="7" height="11" viewBox="0 0 7 11"><path d="M1 0.5 L5.5 5 L1 9.5" stroke="#606060" stroke-width="1.2" fill="none"/></svg><div style="position:absolute;left:293px;top:1084px;width:113px;height:26px;background:#d9d9d9;"></div><div style="position:absolute;top:1092px;font-size:12px;line-height:12px;color:#000;white-space:nowrap;letter-spacing:0.389px;left:298px;">Include subfolders</div><div style="position:absolute;left:409px;top:1087px;width:1px;height:21px;background:#a0a0a0;"></div><div style="position:absolute;left:520px;top:1087px;width:1px;height:21px;background:#a0a0a0;"></div><div style="position:absolute;left:798px;top:1087px;width:1px;height:21px;background:#a0a0a0;"></div><div style="position:absolute;top:1092px;font-size:12px;line-height:12px;color:#000;white-space:nowrap;transform:scaleX(0.9761);transform-origin:0 0;left:422px;">Check</div><div style="position:absolute;top:1092px;font-size:12px;line-height:12px;color:#000;white-space:nowrap;letter-spacing:-0.064px;left:467px;">Uncheck</div><div style="position:absolute;top:1092px;font-size:12px;line-height:12px;color:#000;white-space:nowrap;letter-spacing:0.135px;left:529px;">Check All</div><div style="position:absolute;top:1092px;font-size:12px;line-height:12px;color:#000;white-space:nowrap;letter-spacing:0.118px;left:595px;">Uncheck all</div><div style="position:absolute;top:1092px;font-size:12px;line-height:12px;color:#8a8a8a;white-space:nowrap;letter-spacing:0.328px;left:670px;">Restore last selection</div><div style="position:absolute;left:879px;top:1085px;width:121px;height:24px;border:1px solid #c8c8c8;"></div><div style="position:absolute;top:1091px;font-size:12px;line-height:12px;color:#000;white-space:nowrap;font-style:italic;letter-spacing:0.247px;left:883px;">Search...</div><svg style="position:absolute;left:13px;top:1123px;" width="16" height="16" viewBox="0 0 16 16"><circle cx="8" cy="8" r="7" fill="none" stroke="#404c58" stroke-width="1"/><path d="M4.5 8 H11.5" stroke="#606870" stroke-width="1.6"/></svg><div style="position:absolute;left:44px;top:1130px;width:176px;height:3px;background:#c8c8c8;border-radius:1px;"></div><div style="position:absolute;left:83px;top:1120px;width:10px;height:21px;background:#fff;border:2px solid #0a78d8;border-radius:5px;"></div><svg style="position:absolute;left:234px;top:1123px;" width="16" height="16" viewBox="0 0 16 16"><circle cx="8" cy="8" r="7" fill="none" stroke="#404c58" stroke-width="1"/><path d="M4.5 8 H11.5 M8 4.5 V11.5" stroke="#606870" stroke-width="1.4"/></svg><div style="position:absolute;top:1125px;font-size:12px;line-height:12px;color:#000;white-space:nowrap;transform:scaleX(0.9672);transform-origin:0 0;left:266px;">Items:</div><div style="position:absolute;top:1125px;font-size:12px;line-height:12px;color:#000;white-space:nowrap;left:311px;">9</div><div style="position:absolute;top:1125px;font-size:12px;line-height:12px;color:#000;white-space:nowrap;letter-spacing:-0.04px;left:1230px;">Contact us</div><svg style="position:absolute;left:1299px;top:1121px;" width="21" height="21" viewBox="0 0 21 21"><circle cx="10.5" cy="10.5" r="9.5" fill="#fff" stroke="#2e8b4a" stroke-width="1.3"/><text x="10.5" y="14.5" text-anchor="middle" font-family="Liberation Sans" font-weight="bold" font-size="12" fill="#2e8b4a">@</text></svg><div style="position:absolute;top:1125px;font-size:12px;line-height:12px;color:#000;white-space:nowrap;letter-spacing:-0.12px;left:1323px;">E-mail</div><svg style="position:absolute;left:1364px;top:1121px;" width="21" height="21" viewBox="0 0 21 21"><circle cx="10.5" cy="10.5" r="9.5" fill="#fff" stroke="#2a4a7a" stroke-width="1.3"/><path d="M12.3 5.5 H11 Q9.3 5.5 9.3 7.3 V9 H8 V10.8 H9.3 V16 H11.2 V10.8 H12.5 L12.8 9 H11.2 V7.6 Q11.2 7.2 11.7 7.2 H12.8 Z" fill="#2a4a7a"/></svg><div style="position:absolute;top:1125px;font-size:12px;line-height:12px;color:#000;white-space:nowrap;transform:scaleX(0.9678);transform-origin:0 0;left:1388px;">Facebook</div><svg style="position:absolute;left:1446px;top:1121px;" width="21" height="21" viewBox="0 0 21 21"><circle cx="10.5" cy="10.5" r="9.5" fill="#fff" stroke="#d02020" stroke-width="1.3"/><rect x="5" y="6.5" width="11" height="8" rx="2" fill="#e02020"/><path d="M9 8.5 L13 10.5 L9 12.5 Z" fill="#fff"/></svg><div style="position:absolute;top:1125px;font-size:12px;line-height:12px;color:#000;white-space:nowrap;letter-spacing:-0.192px;left:1470px;">YouTube</div><svg style="position:absolute;left:1524px;top:1134px;" width="9" height="9" viewBox="0 0 9 9"><rect x="6" y="0" width="2" height="2" fill="#909090"/><rect x="3" y="3" width="2" height="2" fill="#909090"/><rect x="6" y="3" width="2" height="2" fill="#909090"/><rect x="0" y="6" width="2" height="2" fill="#909090"/><rect x="3" y="6" width="2" height="2" fill="#909090"/><rect x="6" y="6" width="2" height="2" fill="#909090"/></svg><div style="position:absolute;left:1534px;top:107px;width:1px;height:67px;background:#dcdcdc;"></div><svg style="position:absolute;left:1029px;top:122px;" width="31" height="31" viewBox="0 0 31 31"><defs><linearGradient id="mgp" x1="0" y1="0" x2="0" y2="1"><stop offset="0" stop-color="#a8c4ea"/><stop offset="0.5" stop-color="#6a9ee0"/><stop offset="1" stop-color="#8ac0f8"/></linearGradient></defs><path d="M21 21 L28 28" stroke="#707070" stroke-width="4.2" stroke-linecap="round"/><circle cx="13" cy="13" r="11.2" fill="#f0f0ec" stroke="#c8c8c4" stroke-width="1"/><circle cx="13" cy="13" r="9.2" fill="url(#mgp)"/><path d="M13 8 V18 M8 13 H18" stroke="#fff" stroke-width="2.6"/></svg><svg style="position:absolute;left:1089px;top:122px;" width="31" height="31" viewBox="0 0 31 31"><defs><linearGradient id="mgm" x1="0" y1="0" x2="0" y2="1"><stop offset="0" stop-color="#a8c4ea"/><stop offset="0.5" stop-color="#6a9ee0"/><stop offset="1" stop-color="#8ac0f8"/></linearGradient></defs><path d="M21 21 L28 28" stroke="#707070" stroke-width="4.2" stroke-linecap="round"/><circle cx="13" cy="13" r="11.2" fill="#f0f0ec" stroke="#c8c8c4" stroke-width="1"/><circle cx="13" cy="13" r="9.2" fill="url(#mgm)"/><path d="M8 13 H18" stroke="#fff" stroke-width="2.6"/></svg><div style="position:absolute;left:1139px;top:125px;width:1px;height:42px;background:#a0a0a0;"></div><svg style="position:absolute;left:1164px;top:122px;" width="26" height="31" viewBox="0 0 26 31"><path d="M1 1 H18 L24 7 V29 H1 Z" fill="#f8f8f8" stroke="#a8a8a8"/><path d="M18 1 V7 H24" fill="#fff" stroke="#b0b0b0"/><rect x="4.5" y="3.5" width="12" height="4" rx="1" fill="#fff0c0" stroke="#f08a10" stroke-width="1.2"/><rect x="4.5" y="10.6" width="2" height="0.9" fill="#9a9a9a"/><rect x="7.7" y="10.6" width="4" height="0.9" fill="#9a9a9a"/><rect x="12.9" y="10.6" width="4" height="0.9" fill="#9a9a9a"/><rect x="18.1" y="10.6" width="2" height="0.9" fill="#9a9a9a"/><rect x="4.5" y="12.6" width="3" height="0.9" fill="#9a9a9a"/><rect x="8.7" y="12.6" width="4" height="0.9" fill="#9a9a9a"/><rect x="13.899999999999999" y="12.6" width="3" height="0.9" fill="#9a9a9a"/><rect x="18.099999999999998" y="12.6" width="3.400000000000002" height="0.9" fill="#9a9a9a"/><rect x="4.5" y="14.6" width="4" height="0.9" fill="#9a9a9a"/><rect x="9.7" y="14.6" width="2" height="0.9" fill="#9a9a9a"/><rect x="12.899999999999999" y="14.6" width="4" height="0.9" fill="#9a9a9a"/><rect x="18.099999999999998" y="14.6" width="2" height="0.9" fill="#9a9a9a"/><rect x="4.5" y="16.6" width="3" height="0.9" fill="#9a9a9a"/><rect x="8.7" y="16.6" width="3" height="0.9" fill="#9a9a9a"/><rect x="12.899999999999999" y="16.6" width="4" height="0.9" fill="#9a9a9a"/><rect x="18.099999999999998" y="16.6" width="2" height="0.9" fill="#9a9a9a"/><rect x="4.5" y="18.6" width="2" height="0.9" fill="#9a9a9a"/><rect x="7.7" y="18.6" width="4" height="0.9" fill="#9a9a9a"/><rect x="12.9" y="18.6" width="3" height="0.9" fill="#9a9a9a"/><rect x="17.1" y="18.6" width="4" height="0.9" fill="#9a9a9a"/><rect x="4.5" y="20.6" width="4" height="0.9" fill="#9a9a9a"/><rect x="9.7" y="20.6" width="3" height="0.9" fill="#9a9a9a"/><rect x="13.899999999999999" y="20.6" width="3" height="0.9" fill="#9a9a9a"/><rect x="18.099999999999998" y="20.6" width="3.400000000000002" height="0.9" fill="#9a9a9a"/><rect x="4.5" y="22.6" width="2" height="0.9" fill="#9a9a9a"/><rect x="7.7" y="22.6" width="2" height="0.9" fill="#9a9a9a"/><rect x="10.9" y="22.6" width="4" height="0.9" fill="#9a9a9a"/><rect x="16.1" y="22.6" width="2" height="0.9" fill="#9a9a9a"/><rect x="19.3" y="22.6" width="2.1999999999999993" height="0.9" fill="#9a9a9a"/><rect x="4.5" y="24.6" width="3" height="0.9" fill="#9a9a9a"/><rect x="8.7" y="24.6" width="4" height="0.9" fill="#9a9a9a"/><rect x="13.899999999999999" y="24.6" width="2" height="0.9" fill="#9a9a9a"/><rect x="17.099999999999998" y="24.6" width="4" height="0.9" fill="#9a9a9a"/><rect x="4.5" y="26.6" width="2" height="0.9" fill="#9a9a9a"/><rect x="7.7" y="26.6" width="2" height="0.9" fill="#9a9a9a"/><rect x="10.9" y="26.6" width="4" height="0.9" fill="#9a9a9a"/><rect x="16.1" y="26.6" width="2" height="0.9" fill="#9a9a9a"/><rect x="19.3" y="26.6" width="2.1999999999999993" height="0.9" fill="#9a9a9a"/></svg><svg style="position:absolute;left:1229px;top:122px;" width="30" height="30" viewBox="0 0 30 30"><defs><linearGradient id="fwg" x1="0" y1="0" x2="0" y2="1"><stop offset="0" stop-color="#a0c0dc"/><stop offset="1" stop-color="#e4eef8"/></linearGradient></defs><rect x="0.5" y="0.5" width="29" height="29" fill="url(#fwg)" stroke="#a8a8a8"/><path d="M3.5 5.5 H21 L26.5 11 V29.5 H3.5 Z" fill="#f4f4f4" stroke="#a0a0a0"/><path d="M21 5.5 V11 H26.5" fill="#fff" stroke="#a0a0a0"/><path d="M7 9.5 H22" stroke="#5a80b8" stroke-width="0.9"/><path d="M7 11.5 H22" stroke="#5a80b8" stroke-width="0.9"/><path d="M7 13.5 H22" stroke="#5a80b8" stroke-width="0.9"/><path d="M7 15.5 H24" stroke="#5a80b8" stroke-width="0.9"/><path d="M7 17.5 H24" stroke="#5a80b8" stroke-width="0.9"/><path d="M5.5 23.5 H25" stroke="#2a6ab8" stroke-width="1.4"/><path d="M9 20.5 L5 23.5 L9 26.5 M21.5 20.5 L25.5 23.5 L21.5 26.5" stroke="#2a6ab8" stroke-width="1.4" fill="none"/></svg><svg style="position:absolute;left:1300px;top:122px;" width="30" height="30" viewBox="0 0 30 30"><defs><linearGradient id="wpg" x1="0" y1="0" x2="0" y2="1"><stop offset="0" stop-color="#a0c0dc"/><stop offset="1" stop-color="#e4eef8"/></linearGradient></defs><rect x="0.5" y="0.5" width="29" height="29" fill="url(#wpg)" stroke="#a8a8a8"/><path d="M5.5 3.5 H20 L24.5 8 V26.5 H5.5 Z" fill="#f4f4f4" stroke="#a0a0a0"/><path d="M20 3.5 V8 H24.5" fill="#fff" stroke="#a0a0a0"/><path d="M9 7.5 H16" stroke="#5a80b8" stroke-width="0.9"/><path d="M9 9.5 H16" stroke="#5a80b8" stroke-width="0.9"/><path d="M9 11.5 H21" stroke="#5a80b8" stroke-width="0.9"/><path d="M9 13.5 H21" stroke="#5a80b8" stroke-width="0.9"/><path d="M9 15.5 H21" stroke="#5a80b8" stroke-width="0.9"/><path d="M9 17.5 H21" stroke="#5a80b8" stroke-width="0.9"/><path d="M9 19.5 H21" stroke="#5a80b8" stroke-width="0.9"/><path d="M9 21.5 H21" stroke="#5a80b8" stroke-width="0.9"/></svg><div style="position:absolute;top:156px;font-size:12px;line-height:12px;color:#000;white-space:nowrap;letter-spacing:0.215px;left:1022px;">Zoom In</div><div style="position:absolute;top:156px;font-size:12px;line-height:12px;color:#000;white-space:nowrap;letter-spacing:0.265px;left:1077px;">Zoom Out</div><div style="position:absolute;top:156px;font-size:12px;line-height:12px;color:#000;white-space:nowrap;transform:scaleX(0.9565);transform-origin:0 0;left:1149px;">Actual size</div><div style="position:absolute;top:156px;font-size:12px;line-height:12px;color:#000;white-space:nowrap;letter-spacing:0.017px;left:1215px;">Fit to width</div><div style="position:absolute;top:156px;font-size:12px;line-height:12px;color:#000;white-space:nowrap;letter-spacing:-0.115px;left:1284px;">Whole page</div><div style="position:absolute;left:1038px;top:189px;width:481px;height:681px;background:#000;"></div><div style="position:absolute;left:1034px;top:185px;width:481px;height:681px;background:#fff;border:1px solid #7a7a7a;"></div><svg style="position:absolute;left:1035px;top:186px;" width="480" height="680" viewBox="1035 186 480 680"><defs><clipPath id="mapclip"><rect x="1109" y="339" width="331" height="403"/></clipPath></defs><g clip-path="url(#mapclip)"><rect x="1109" y="339" width="331" height="403" fill="#ffe8f2"/><polygon points="1109,339 1282.3,339 1109,614.5" fill="#fff6c0"/><polygon points="1109,640 1174.7,681.2 1222.8,711.8 1211.7,729 1201.2,724.7 1155,695.1 1109,667.6" fill="#ebebeb"/><polygon points="1109,667.6 1155,695.1 1201.2,724.7 1191.3,742 1140.8,742 1130.9,733.4 1109,722.3" fill="#c9c9c9"/><polygon points="1109,722.3 1130.9,733.4 1140.8,742 1109,742" fill="#ebebeb"/><polygon points="1201.2,724.7 1211.7,729 1228.3,742 1191.3,742" fill="#9a9a9a"/><polygon points="1251.7,556.4 1263.6,563.3 1244.4,594.7 1248.1,624.8 1316.5,667.6 1384.8,710.4 1404,711.3 1417.6,698.6 1428.6,665.8 1432.2,651.2 1438.6,629.3 1440,629 1440,742 1403,742 1395.8,731 1377.5,722.3 1317.8,685.8 1232.6,633 1217.1,640.3 1187,689.5 1174.3,681.3" fill="#fff"/><polygon points="1313.7,493.6 1350.2,516.4 1315.6,572.8 1278.2,551" fill="#c8c8c8" stroke="#000" stroke-width="0.8"/><polygon points="1370.3,506.3 1395.8,520.9 1383,537.3 1359.3,523.7" fill="#c8c8c8" stroke="#000" stroke-width="0.8"/><polygon points="1395.8,520.9 1432.2,542.7 1414,573.7 1376.6,552.8 1388,536" fill="#c8c8c8" stroke="#000" stroke-width="0.8"/><polygon points="1388.5,561.9 1404,572.8 1400,578 1385,569" fill="#c8c8c8" stroke="#000" stroke-width="0.8"/><polygon points="1405.8,413.4 1440,434 1440,445 1415.8,475.4 1381.2,454.4 1395,432" fill="#9a9a9a" stroke="#000" stroke-width="0.8"/><polygon points="1405.8,471.7 1423.1,483.6 1411.3,500.9 1392.5,488.1" fill="#9a9a9a" stroke="#000" stroke-width="0.8"/><polygon points="1420.4,356 1434,339 1440,339 1440,368.7" fill="#9a9a9a" stroke="#000" stroke-width="0.8"/><polygon points="1330.2,742 1341,721.4 1352,726.8 1357.5,715 1371.2,722.3 1366.6,733.2 1373,742" fill="#9a9a9a" stroke="#000" stroke-width="0.8"/><polyline points="1282.3,339 1109,614.5" fill="none" stroke="#000" stroke-width="1.05"/><polyline points="1109,469 1175.2,509 1251.7,556.4 1263.6,563.3" fill="none" stroke="#000" stroke-width="1.05"/><polyline points="1241.7,403.4 1322,454.4" fill="none" stroke="#000" stroke-width="1.05"/><polyline points="1361.1,339 1440,393.3" fill="none" stroke="#000" stroke-width="1.05"/><polyline points="1374.8,371.5 1440,414.3" fill="none" stroke="#000" stroke-width="1.05"/><polyline points="1374.8,371.5 1322,454.4" fill="none" stroke="#000" stroke-width="1.05"/><polyline points="1328.3,458.9 1440,529.1" fill="none" stroke="#000" stroke-width="1.05"/><polyline points="1327.8,458.8 1271.3,551.2 1264,563.4" fill="none" stroke="#000" stroke-width="1.05"/><polyline points="1251.7,556.4 1218.9,612 1174.3,681.3" fill="none" stroke="#000" stroke-width="1.05"/><polyline points="1263.6,563.3 1244.4,594.7 1248.1,624.8 1316.5,667.6 1384.8,710.4" fill="none" stroke="#000" stroke-width="1.05"/><polyline points="1384.8,710.4 1404,711.3 1417.6,698.6 1428.6,665.8 1432.2,651.2 1438.6,629.3" fill="none" stroke="#000" stroke-width="1.05"/><polyline points="1232.6,633 1217.1,640.3 1187,689.5" fill="none" stroke="#000" stroke-width="1.05"/><polyline points="1232.6,633 1317.8,685.8 1377.5,722.3 1395.8,731 1403,742" fill="none" stroke="#000" stroke-width="1.05"/><polyline points="1403,742 1417.6,698.6" fill="none" stroke="#000" stroke-width="1.05"/><polyline points="1317.8,685.8 1284.6,742" fill="none" stroke="#000" stroke-width="1.05"/><polyline points="1356.6,603.8 1316.5,667.6" fill="none" stroke="#000" stroke-width="1.05"/><polyline points="1271.3,551.2 1356.6,603.8 1432.2,651.2" fill="none" stroke="#000" stroke-width="1.05"/><polyline points="1109,640 1174.7,681.2 1222.8,711.8 1270.2,742" fill="none" stroke="#000" stroke-width="1.05"/><polyline points="1109,667.6 1155,695.1 1201.2,724.7 1211.7,729 1228.3,742" fill="none" stroke="#000" stroke-width="1.05"/><polyline points="1222.8,711.8 1211.7,729" fill="none" stroke="#000" stroke-width="1.05"/><polyline points="1201.2,724.7 1191.3,742" fill="none" stroke="#000" stroke-width="1.05"/><polyline points="1109,722.3 1130.9,733.4 1140.8,742" fill="none" stroke="#000" stroke-width="1.05"/><polyline points="1155,695.1 1130.9,733.4" fill="none" stroke="#000" stroke-width="1.05"/><polyline points="1211,730.3 1205.5,742" fill="none" stroke="#000" stroke-width="1.05"/><path d="M1435 742 L1439 725" stroke="#c020c0" stroke-width="1"/><circle cx="1241.7" cy="403.4" r="1.6" fill="#fff" stroke="#000" stroke-width="0.6"/><circle cx="1175.2" cy="509" r="1.6" fill="#fff" stroke="#000" stroke-width="0.6"/><circle cx="1374.8" cy="371.5" r="1.6" fill="#fff" stroke="#000" stroke-width="0.6"/><circle cx="1322" cy="454.4" r="1.6" fill="#fff" stroke="#000" stroke-width="0.6"/><circle cx="1327.8" cy="458.8" r="1.6" fill="#fff" stroke="#000" stroke-width="0.6"/><circle cx="1271.3" cy="551.2" r="1.6" fill="#fff" stroke="#000" stroke-width="0.6"/><circle cx="1251.7" cy="556.4" r="1.6" fill="#fff" stroke="#000" stroke-width="0.6"/><circle cx="1263.6" cy="563.3" r="1.6" fill="#fff" stroke="#000" stroke-width="0.6"/><circle cx="1244.4" cy="594.7" r="1.6" fill="#fff" stroke="#000" stroke-width="0.6"/><circle cx="1248.1" cy="624.8" r="1.6" fill="#fff" stroke="#000" stroke-width="0.6"/><circle cx="1232.6" cy="633" r="1.6" fill="#fff" stroke="#000" stroke-width="0.6"/><circle cx="1217.1" cy="640.3" r="1.6" fill="#fff" stroke="#000" stroke-width="0.6"/><circle cx="1218.9" cy="612" r="1.6" fill="#fff" stroke="#000" stroke-width="0.6"/><circle cx="1174.3" cy="681.3" r="1.6" fill="#fff" stroke="#000" stroke-width="0.6"/><circle cx="1187" cy="689.5" r="1.6" fill="#fff" stroke="#000" stroke-width="0.6"/><circle cx="1222.6" cy="711.3" r="1.6" fill="#fff" stroke="#000" stroke-width="0.6"/><circle cx="1356.6" cy="603.8" r="1.6" fill="#fff" stroke="#000" stroke-width="0.6"/><circle cx="1316.5" cy="667.6" r="1.6" fill="#fff" stroke="#000" stroke-width="0.6"/><circle cx="1317.8" cy="685.8" r="1.6" fill="#fff" stroke="#000" stroke-width="0.6"/><circle cx="1384.8" cy="710.4" r="1.6" fill="#fff" stroke="#000" stroke-width="0.6"/><circle cx="1404" cy="711.3" r="1.6" fill="#fff" stroke="#000" stroke-width="0.6"/><circle cx="1417.6" cy="698.6" r="1.6" fill="#fff" stroke="#000" stroke-width="0.6"/><circle cx="1428.6" cy="665.8" r="1.6" fill="#fff" stroke="#000" stroke-width="0.6"/><circle cx="1432.2" cy="651.2" r="1.6" fill="#fff" stroke="#000" stroke-width="0.6"/><circle cx="1377.5" cy="722.3" r="1.6" fill="#fff" stroke="#000" stroke-width="0.6"/><circle cx="1395.8" cy="731" r="1.6" fill="#fff" stroke="#000" stroke-width="0.6"/><circle cx="1407" cy="739" r="1.6" fill="#fff" stroke="#000" stroke-width="0.6"/><text x="1239.5" y="470.5" text-anchor="middle" font-family="Liberation Sans" font-size="5" fill="#000">46</text><path d="M1236.0 471.7 H1243.0" stroke="#000" stroke-width="0.6"/><text x="1239.5" y="476.5" text-anchor="middle" font-family="Liberation Sans" font-size="5" fill="#000">17</text><text x="1301" y="371.2" text-anchor="middle" font-family="Liberation Sans" font-size="5" fill="#000">45</text><path d="M1297.5 372.4 H1304.5" stroke="#000" stroke-width="0.6"/><text x="1301" y="377.2" text-anchor="middle" font-family="Liberation Sans" font-size="5" fill="#000">14</text><text x="1366.2" y="425.8" text-anchor="middle" font-family="Liberation Sans" font-size="5" fill="#000">46</text><path d="M1362.7 427 H1369.7" stroke="#000" stroke-width="0.6"/><text x="1366.2" y="431.8" text-anchor="middle" font-family="Liberation Sans" font-size="5" fill="#000">15</text><text x="1173.4" y="572.5" text-anchor="middle" font-family="Liberation Sans" font-size="5" fill="#000">46</text><path d="M1169.9 573.7 H1176.9" stroke="#000" stroke-width="0.6"/><text x="1173.4" y="578.5" text-anchor="middle" font-family="Liberation Sans" font-size="5" fill="#000">3</text><text x="1231.7" y="606.1999999999999" text-anchor="middle" font-family="Liberation Sans" font-size="5" fill="#000">46</text><path d="M1228.2 607.4 H1235.2" stroke="#000" stroke-width="0.6"/><text x="1231.7" y="612.1999999999999" text-anchor="middle" font-family="Liberation Sans" font-size="5" fill="#000">1</text><text x="1250" y="688.3" text-anchor="middle" font-family="Liberation Sans" font-size="5" fill="#000">45</text><path d="M1246.5 689.5 H1253.5" stroke="#000" stroke-width="0.6"/><text x="1250" y="694.3" text-anchor="middle" font-family="Liberation Sans" font-size="5" fill="#000">6</text><text x="1360.2" y="581.5999999999999" text-anchor="middle" font-family="Liberation Sans" font-size="5" fill="#000">45</text><path d="M1356.7 582.8 H1363.7" stroke="#000" stroke-width="0.6"/><text x="1360.2" y="587.5999999999999" text-anchor="middle" font-family="Liberation Sans" font-size="5" fill="#000">18</text><text x="1292.8" y="611.6999999999999" text-anchor="middle" font-family="Liberation Sans" font-size="5" fill="#000">45</text><path d="M1289.3 612.9 H1296.3" stroke="#000" stroke-width="0.6"/><text x="1292.8" y="617.6999999999999" text-anchor="middle" font-family="Liberation Sans" font-size="5" fill="#000">16</text><text x="1368.4" y="655.5" text-anchor="middle" font-family="Liberation Sans" font-size="5" fill="#000">45</text><path d="M1364.9 656.7 H1371.9" stroke="#000" stroke-width="0.6"/><text x="1368.4" y="661.5" text-anchor="middle" font-family="Liberation Sans" font-size="5" fill="#000">5</text><text x="1313.7" y="724.6999999999999" text-anchor="middle" font-family="Liberation Sans" font-size="5" fill="#000">45</text><path d="M1310.2 725.9 H1317.2" stroke="#000" stroke-width="0.6"/><text x="1313.7" y="730.6999999999999" text-anchor="middle" font-family="Liberation Sans" font-size="5" fill="#000">13</text></g><text x="1142" y="353" font-family="Liberation Sans" font-weight="bold" font-style="italic" font-size="11" fill="#3a0a0a" textLength="49" lengthAdjust="spacing">roten</text><text x="1143" y="407" font-family="Liberation Sans" font-weight="bold" font-style="italic" font-size="12" fill="#3a0a0a" textLength="52" lengthAdjust="spacing">Hohle</text><text x="0" y="0" transform="translate(1252,641) rotate(31)" font-family="Liberation Sans" font-style="italic" font-size="6" fill="#333" textLength="32">Rote Hohle</text><rect x="1109.5" y="339.5" width="330" height="402" fill="none" stroke="#000" stroke-width="1.3"/><text x="1109" y="273" font-family="Liberation Sans" font-size="8" fill="#2a4aa0" textLength="35" lengthAdjust="spacingAndGlyphs">HESSEN</text><rect x="1109" y="277" width="35" height="3.6" fill="#cc2a30"/><rect x="1109" y="284.8" width="35" height="3.6" fill="#cc2a30"/><rect x="1109" y="292.5" width="35" height="3.6" fill="#cc2a30"/><rect x="1109" y="300" width="35" height="3.6" fill="#cc2a30"/><rect x="1109" y="308" width="35" height="3.6" fill="#cc2a30"/><path d="M1117.5 285 H1136.5 V298 Q1136.5 307 1127 307 Q1117.5 307 1117.5 298 Z" fill="#2a4aa0"/><path d="M1120 290 H1134 M1120 295 H1134 M1120 300 H1133" stroke="#e8e8f0" stroke-width="1.6"/><path d="M1116 286.5 L1116 282 L1120 284 L1123 281 L1127 284 L1131 281 L1134 284 L1138 282 L1138 286.5 Z" fill="#e0c040"/><text x="1153" y="284.5" font-family="Liberation Sans" font-size="6.5" font-weight="bold" fill="#000" textLength="102" lengthAdjust="spacingAndGlyphs">Amt für Bodenmanagement Fulda</text><text x="1153" y="293.5" font-family="Liberation Sans" font-size="6" fill="#222" textLength="51" lengthAdjust="spacingAndGlyphs">Washingtonallee 1</text><text x="1153" y="301" font-family="Liberation Sans" font-size="6" fill="#222" textLength="34" lengthAdjust="spacingAndGlyphs">36041 Fulda</text><text x="1334" y="277.5" font-family="Liberation Sans" font-size="10" font-weight="bold" fill="#000" textLength="80.5" lengthAdjust="spacingAndGlyphs">Auszug aus dem</text><text x="1334" y="288" font-family="Liberation Sans" font-size="11" font-weight="bold" fill="#000" textLength="107.5" lengthAdjust="spacingAndGlyphs">Liegenschaftskataster</text><text x="1334.5" y="300.5" font-family="Liberation Sans" font-size="5.5" fill="#111" textLength="81" lengthAdjust="spacingAndGlyphs">Liegenschaftskarte 1 : 500</text><text x="1334.5" y="307" font-family="Liberation Sans" font-size="5.5" fill="#111" textLength="22" lengthAdjust="spacingAndGlyphs">Hessen</text><text x="1334.5" y="314" font-family="Liberation Sans" font-size="5.5" fill="#111" textLength="54.5" lengthAdjust="spacingAndGlyphs">erstellt am 17.09.2013</text><text x="1334.5" y="321" font-family="Liberation Sans" font-size="5.5" fill="#111" textLength="48.5" lengthAdjust="spacingAndGlyphs">Antrag: 000706624</text><text x="1334.5" y="328.5" font-family="Liberation Sans" font-size="5.5" fill="#111" textLength="20" lengthAdjust="spacingAndGlyphs">AZ: H 8</text><text x="1424" y="338" font-family="Liberation Sans" font-size="4.5" font-weight="bold" fill="#000" textLength="15" lengthAdjust="spacingAndGlyphs">21758</text><text x="1110" y="320" font-family="Liberation Sans" font-size="4.8" fill="#000" textLength="20" lengthAdjust="spacingAndGlyphs">Flurstück</text><text x="1140" y="320" font-family="Liberation Sans" font-size="4.8" fill="#000" textLength="12" lengthAdjust="spacingAndGlyphs">45/17</text><text x="1182" y="320" font-family="Liberation Sans" font-size="4.8" fill="#000" textLength="24" lengthAdjust="spacingAndGlyphs">Gemeinde</text><text x="1226" y="320" font-family="Liberation Sans" font-size="4.8" fill="#000" textLength="16" lengthAdjust="spacingAndGlyphs">Fulda</text><text x="1110" y="325.5" font-family="Liberation Sans" font-size="4.8" fill="#000" textLength="10" lengthAdjust="spacingAndGlyphs">Flur</text><text x="1140" y="325.5" font-family="Liberation Sans" font-size="4.8" fill="#000" textLength="3" lengthAdjust="spacingAndGlyphs">6</text><text x="1182" y="325.5" font-family="Liberation Sans" font-size="4.8" fill="#000" textLength="12" lengthAdjust="spacingAndGlyphs">Kreis</text><text x="1226" y="325.5" font-family="Liberation Sans" font-size="4.8" fill="#000" textLength="13" lengthAdjust="spacingAndGlyphs">Fulda</text><text x="1110" y="330.5" font-family="Liberation Sans" font-size="4.8" fill="#000" textLength="53" lengthAdjust="spacingAndGlyphs">Gemarkung Kerzell</text><text x="1182" y="330.5" font-family="Liberation Sans" font-size="4.8" fill="#000" textLength="39" lengthAdjust="spacingAndGlyphs">Regierungsbezirk</text><text x="1226" y="330.5" font-family="Liberation Sans" font-size="4.8" fill="#000" textLength="14" lengthAdjust="spacingAndGlyphs">Kassel</text><text x="0" y="0" transform="translate(1446,342) rotate(90)" font-family="Liberation Sans" font-size="4.5" fill="#222" textLength="20">5 641 900</text><text x="0" y="0" transform="translate(1107,716) rotate(-90)" font-family="Liberation Sans" font-size="4.5" fill="#222" textLength="11">3 541</text><text x="1109" y="747" font-family="Liberation Sans" font-size="4.5" font-weight="bold" fill="#000" textLength="16" lengthAdjust="spacingAndGlyphs">Gemarkung</text><text x="1109" y="758" font-family="Liberation Sans" font-size="4.5" font-weight="bold" fill="#000" textLength="32" lengthAdjust="spacingAndGlyphs">Maßstab 1:500</text><rect x="1154" y="755" width="55" height="2.5" fill="#fff" stroke="#000" stroke-width="0.7"/><path d="M1168 755 V757.5 M1182 755 V757.5 M1196 755 V757.5" stroke="#000" stroke-width="0.6"/><text x="1219" y="758" font-family="Liberation Sans" font-size="4.5" font-weight="bold" fill="#000" textLength="10" lengthAdjust="spacingAndGlyphs">Meter</text><text x="1148" y="775" font-family="Liberation Sans" font-size="4.5" fill="#222" textLength="249" lengthAdjust="spacingAndGlyphs">Vervielfältigung nur für eigene Zwecke zulässig. Weitergabe an Dritte nur mit Zustimmung.</text><text x="1134" y="780" font-family="Liberation Sans" font-size="4.5" fill="#222" textLength="279" lengthAdjust="spacingAndGlyphs">Die Abbildung der Flurstücksgrenzen entspricht nicht der Genauigkeit der Vermessungsunterlagen des Katasters.</text><text x="1225" y="784.5" font-family="Liberation Sans" font-size="4.5" fill="#222" textLength="100" lengthAdjust="spacingAndGlyphs">Gedruckt am 21. September 2013 (07-21-10 000)</text></svg>
</body></html>
